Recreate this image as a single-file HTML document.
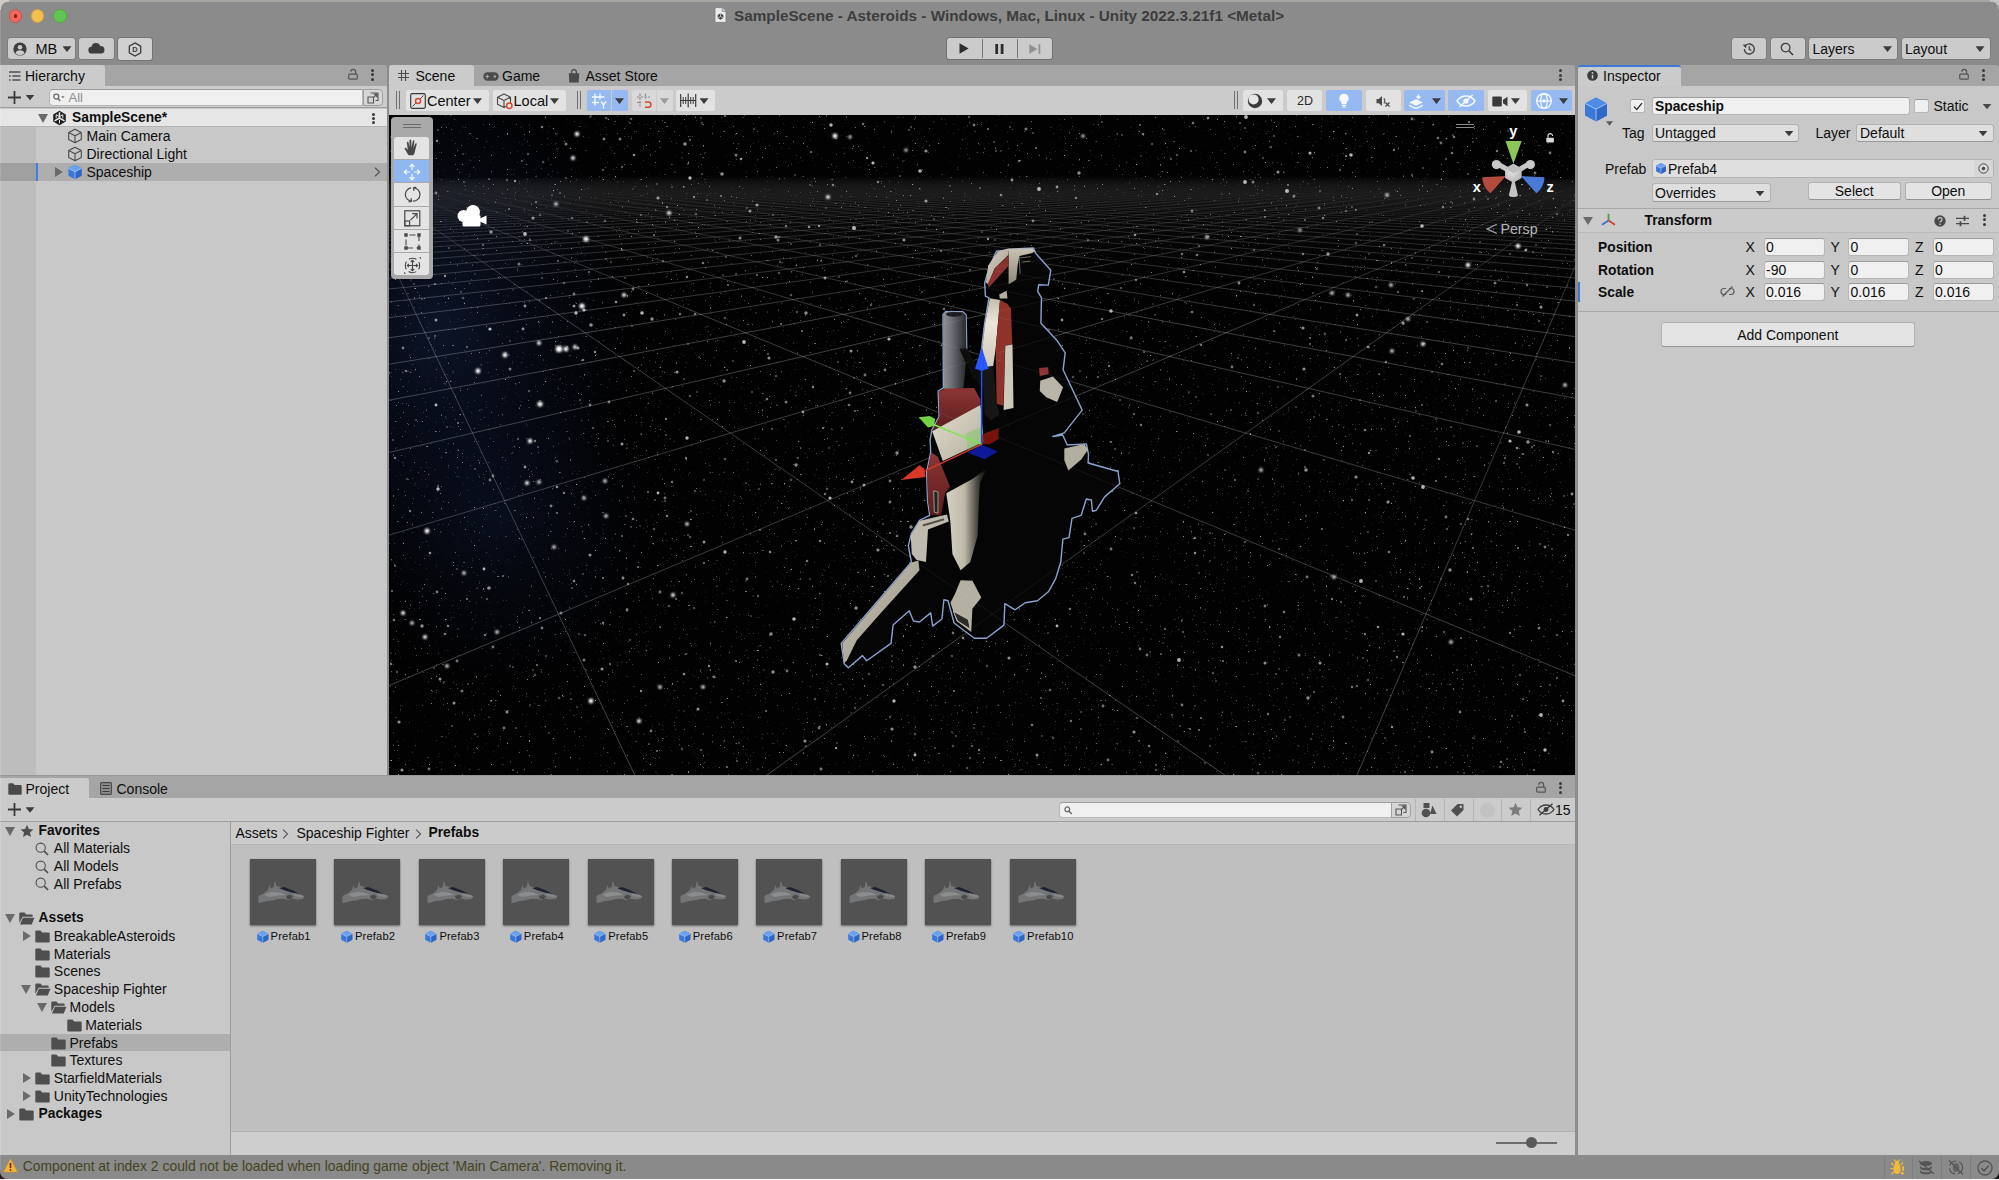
<!DOCTYPE html>
<html lang="en">
<head>
<meta charset="utf-8">
<title>SampleScene - Asteroids - Unity</title>
<style>
*{box-sizing:border-box;margin:0;padding:0}
html,body{width:1999px;height:1180px;overflow:hidden;background:#c8c8c8}
body{font-family:"Liberation Sans",sans-serif;font-size:14px;color:#0e0e0e;position:relative;line-height:1}
.a{position:absolute}
.t{position:absolute;white-space:nowrap;line-height:18px;height:18px}
.b{font-weight:bold;font-size:13.8px}
svg{position:absolute;overflow:visible}
#win{position:absolute;left:0;top:0;width:1999px;height:1178.600px;background:#8b8b8b;border-radius:0 0 8px 8px;overflow:hidden}
.btn{position:absolute;background:#cbcbcb;border-radius:2.500px;box-shadow:0 0 0 .5px rgba(90,90,90,.55)}
.tabbar{position:absolute;background:#a5a5a5;height:21px;border-radius:3px 3px 0 0}
.tab{position:absolute;background:#cbcbcb;height:21px;top:0;border-radius:3px 3px 0 0}
.panel{position:absolute;background:#c8c8c8}
.fld{position:absolute;background:#f0f0f0;border:1px solid #b6b6b6;border-top-color:#9c9c9c;border-radius:3px}
.dd{position:absolute;background:#dfdfdf;border:1px solid #b2b2b2;border-bottom-color:#999;border-radius:3px}
.sb{position:absolute;background:#e2e2e2;border-radius:2px;top:90px;height:21px}
.sb.on{background:#95b9f0}
.tri{position:absolute;width:9px;height:5.800px;background:#3c3c3c;clip-path:polygon(0 0,100% 0,50% 100%);margin-top:.2px}
.trr{position:absolute;width:0;height:0;border-top:5px solid transparent;border-bottom:5px solid transparent;border-left:8px solid #6a6a6a}
.trd{position:absolute;width:0;height:0;border-left:5.5px solid transparent;border-right:5.5px solid transparent;border-top:9px solid #6a6a6a}
.dots{position:absolute;width:3px}
.dots i{display:block;width:3px;height:3px;border-radius:50%;background:#3a3a3a;margin-bottom:1.5px}
</style>
</head>
<body>
<div class="a" style="left:0;top:1166px;width:14px;height:12.600px;background:#2e1a16"></div><div class="a" style="left:1985px;top:1166px;width:14px;height:12.600px;background:#1a1414"></div><div class="a" style="left:0;top:1178.600px;width:1999px;height:1.400px;background:#fbfbfb"></div>
<div id="win">

<!-- ===== TITLE BAR + APP TOOLBAR ===== -->
<div class="a" style="left:8.800px;top:9.100px;width:13.600px;height:13.600px;border-radius:50%;background:#ec6a5e;border:.5px solid #d14f43"></div>
<div class="a" style="left:13.700px;top:14.100px;width:3.800px;height:3.800px;border-radius:50%;background:#8c1a10"></div>
<div class="a" style="left:30.800px;top:9.300px;width:13.600px;height:13.600px;border-radius:50%;background:#f4bf4f;border:.5px solid #d6a243"></div>
<div class="a" style="left:53px;top:9.100px;width:13.600px;height:13.600px;border-radius:50%;background:#61c554;border:.5px solid #51a73e"></div>
<svg style="left:714px;top:7px" width="13" height="16" viewBox="0 0 13 16"><path d="M1 .6h7.2l3.8 3.8v11H1z" fill="#ececec" stroke="#7a7a7a" stroke-width=".8"/><path d="M8.2.6v3.8H12" fill="#d0d0d0" stroke="#7a7a7a" stroke-width=".7"/><path d="M6.5 6.3l2.8 1.6v3.2l-2.8 1.6-2.8-1.6V7.9z" fill="#444"/><path d="M6.5 9.5V6.3M6.5 9.5l2.8 1.6M6.5 9.5l-2.8 1.6" stroke="#ececec" stroke-width=".7"/></svg>
<div class="t" style="left:734px;top:6.5px;font-weight:bold;font-size:15.3px;color:#3d3d3d">SampleScene - Asteroids - Windows, Mac, Linux - Unity 2022.3.21f1 &lt;Metal&gt;</div>

<!-- ===== APP TOOLBAR ===== -->
<div class="btn" style="left:8px;top:38px;width:67px;height:21px"></div>
<svg style="left:13px;top:41.5px" width="14" height="14" viewBox="0 0 14 14"><circle cx="7" cy="7" r="6.6" fill="#3d3d3d"/><circle cx="7" cy="5.3" r="2.3" fill="#cbcbcb"/><path d="M2.6 10.9c.8-2 2.5-2.6 4.4-2.6s3.6.6 4.4 2.6c-1 1.3-2.6 2.1-4.4 2.1s-3.400-.8-4.400-2.100z" fill="#cbcbcb"/></svg>
<div class="t" style="left:35.5px;top:39.5px;font-size:14.5px">MB</div>
<div class="tri" style="left:62.5px;top:46px"></div>
<div class="btn" style="left:79px;top:38px;width:35px;height:21px"></div>
<svg style="left:88px;top:43px" width="17" height="11" viewBox="0 0 17 11"><path d="M4 10.6a3.4 3.4 0 0 1-.5-6.800A4.600 4.600 0 0 1 12.300 3a3.800 3.800 0 0 1 .7 7.600z" fill="#3d3d3d"/></svg>
<div class="btn" style="left:117.500px;top:37.500px;width:34px;height:22.500px;background:#d0d0d0;box-shadow:0 0 0 1px #747474"></div>
<svg style="left:128px;top:42px" width="14" height="15" viewBox="0 0 14 15"><path d="M7 .9l5.700 3.300v6.600L7 14.100 1.300 10.800V4.200z" fill="none" stroke="#3d3d3d" stroke-width="1.300"/><text x="7" y="10.400" font-size="7.500" font-family="Liberation Sans,sans-serif" font-weight="bold" text-anchor="middle" fill="#3d3d3d">D</text></svg>

<div class="btn" style="left:946.500px;top:38px;width:105px;height:21px;box-shadow:0 0 0 .8px #6a6a6a"></div>
<div class="a" style="left:981.500px;top:39px;width:1px;height:19px;background:#7c7c7c"></div>
<div class="a" style="left:1016.500px;top:39px;width:1px;height:19px;background:#7c7c7c"></div>
<svg style="left:959px;top:43px" width="10" height="11" viewBox="0 0 10 11"><path d="M.5.3L9.600 5.500.5 10.700z" fill="#2d2d2d"/></svg>
<svg style="left:995px;top:43.500px" width="9" height="10" viewBox="0 0 9 10"><path d="M.3 0h2.800v10H.3zM5.700 0h2.800v10H5.700z" fill="#2d2d2d"/></svg>
<svg style="left:1029px;top:43.500px" width="12" height="10" viewBox="0 0 12 10"><path d="M.3.200L8.300 5 .3 9.800z" fill="#8f8f8f"/><path d="M9.600.200h1.700v9.600H9.600z" fill="#8f8f8f"/></svg>

<div class="btn" style="left:1732px;top:38px;width:34px;height:21px"></div>
<svg style="left:1742px;top:41.500px" width="14" height="14" viewBox="0 0 14 14"><path d="M2.300 7a5 5 0 1 0 1.500-3.600" fill="none" stroke="#3d3d3d" stroke-width="1.300"/><path d="M.6 2.700l3.900-.2-.5 3.700z" fill="#3d3d3d"/><path d="M7.300 4.300v3l2 1.300" fill="none" stroke="#3d3d3d" stroke-width="1.200"/></svg>
<div class="btn" style="left:1770.500px;top:38px;width:34px;height:21px"></div>
<svg style="left:1780px;top:41.500px" width="14" height="14" viewBox="0 0 14 14"><circle cx="5.600" cy="5.600" r="4.300" fill="none" stroke="#3d3d3d" stroke-width="1.300"/><path d="M8.800 8.800l4.200 4.200" stroke="#3d3d3d" stroke-width="1.600"/></svg>
<div class="btn" style="left:1809px;top:38px;width:88px;height:21px"></div>
<div class="t" style="left:1812.500px;top:39.500px;font-size:14px">Layers</div>
<div class="tri" style="left:1883px;top:46px"></div>
<div class="btn" style="left:1901.500px;top:38px;width:88px;height:21px"></div>
<div class="t" style="left:1905px;top:39.500px;font-size:14px">Layout</div>
<div class="tri" style="left:1975.500px;top:46px"></div>


<!-- ===== HIERARCHY ===== -->
<div class="tabbar" style="left:0;top:65px;width:386.500px"></div>
<div class="tab" style="left:0;top:65px;width:105px;border-radius:0 3px 0 0"></div>
<svg style="left:8.500px;top:70.500px" width="12" height="10" viewBox="0 0 12 10"><path d="M0 1h11.500M3.300 5h8.200M3.300 9h8.200" stroke="#505050" stroke-width="1.400"/><path d="M0 5h1.600M0 9h1.600" stroke="#505050" stroke-width="1.400"/></svg>
<div class="t" style="left:25px;top:67px">Hierarchy</div>
<svg style="left:347.500px;top:69px" width="10" height="11" viewBox="0 0 10 11"><rect x=".7" y="5.200" width="8.600" height="5" rx="1" fill="none" stroke="#555" stroke-width="1.200"/><path d="M7.600 5.200V2.900a2.400 2.400 0 0 0-4.800-.2" fill="none" stroke="#555" stroke-width="1.200"/></svg>
<div class="dots" style="left:370.500px;top:68.800px"><i></i><i></i><i></i></div>
<div class="panel" style="left:0;top:86px;width:386.500px;height:689px"></div>
<div class="a" style="left:0;top:86px;width:386.500px;height:22px;background:#cbcbcb;border-bottom:1px solid #9e9e9e"></div>
<svg style="left:7.500px;top:90.500px" width="13" height="13" viewBox="0 0 13 13"><path d="M6.500 0v13M0 6.500h13" stroke="#3a3a3a" stroke-width="1.800"/></svg>
<div class="tri" style="left:25.500px;top:94.500px;width:9.0px;height:5.5px"></div>
<div class="fld" style="left:49px;top:89px;width:314px;height:17px;border-radius:4px 0 0 4px"></div>
<svg style="left:53px;top:93px" width="12" height="9" viewBox="0 0 12 9"><circle cx="3.300" cy="3.600" r="2.500" fill="none" stroke="#6a6a6a" stroke-width="1.300"/><path d="M5 5.500l2.300 2.600" stroke="#6a6a6a" stroke-width="1.400"/><path d="M8.300 3.200h3.200l-1.600 2z" fill="#6a6a6a"/></svg>
<div class="t" style="left:68.500px;top:88.500px;font-size:13px;color:#8e8e8e">All</div>
<div class="a" style="left:362.500px;top:89px;width:20px;height:17px;background:#d6d6d6;border:1px solid #a0a0a0;border-radius:0 4px 4px 0"></div>
<svg style="left:366.500px;top:91.500px" width="12" height="12" viewBox="0 0 12 12"><path d="M3.500 1H11v7.500H8.500M1 5h5.500v6H1zM6 6l3.600-3.600M6.700 2.300h3v3" fill="none" stroke="#555" stroke-width="1.100"/></svg>
<div class="a" style="left:0;top:126.500px;width:35.500px;height:648.500px;background:#bdbdbd"></div>
<div class="a" style="left:0;top:108.500px;width:386.500px;height:18px;background:#e6e6e6;border-bottom:1px solid #b4b4b4"></div>
<div class="trd" style="left:37.500px;top:113.500px"></div>
<svg style="left:52px;top:110px" width="15" height="16" viewBox="0 0 15 16"><path d="M7.500.8l6.300 3.600v7.200l-6.300 3.600-6.300-3.600V4.400z" fill="#1f1f1f"/><path d="M7.500 8V2.200M7.500 8l5 2.900M7.500 8l-5 2.900" stroke="#e6e6e6" stroke-width="1.500"/><path d="M4.200 4.700l3.300 1.900 3.300-1.900M4.200 4.700v3.600M10.800 4.700v3.600M7.500 13.500v-3.600" stroke="#e6e6e6" stroke-width="1" fill="none"/></svg>
<div class="t b" style="left:72px;top:108.500px">SampleScene*</div>
<div class="dots" style="left:371.500px;top:112.500px"><i style="margin-bottom:1.200px"></i><i style="margin-bottom:1.200px"></i><i></i></div>
<svg style="left:66.500px;top:128px" width="16" height="16" viewBox="0 0 16 16"><path d="M8 1.200l6.300 3.300v7l-6.300 3.300-6.300-3.300v-7zM1.700 4.500L8 7.800l6.300-3.300M8 7.800v7" fill="none" stroke="#4a4a4a" stroke-width="1.100" stroke-linejoin="round"/></svg>
<div class="t" style="left:86.500px;top:126.500px">Main Camera</div>
<svg style="left:66.500px;top:146px" width="16" height="16" viewBox="0 0 16 16"><path d="M8 1.200l6.300 3.300v7l-6.300 3.300-6.300-3.300v-7zM1.700 4.500L8 7.800l6.300-3.300M8 7.800v7" fill="none" stroke="#4a4a4a" stroke-width="1.100" stroke-linejoin="round"/></svg>
<div class="t" style="left:86.500px;top:144.500px">Directional Light</div>
<div class="a" style="left:0;top:162.500px;width:386.500px;height:18px;background:#aeaeae"></div>
<div class="a" style="left:0;top:162.500px;width:35.500px;height:18px;background:#a0a0a0"></div>
<div class="a" style="left:35.500px;top:162.500px;width:2.500px;height:18px;background:#3f7de0"></div>
<div class="trr" style="left:54.500px;top:166.500px"></div>
<svg style="left:66.500px;top:164px" width="16" height="16" viewBox="0 0 16 16"><path d="M8 .8l6.600 3.500v7.400L8 15.200l-6.600-3.500V4.300z" fill="#3a78d8"/><path d="M8 .8l6.600 3.500L8 7.800 1.400 4.300z" fill="#6aa2f0"/><path d="M8 7.800v7.400l6.600-3.500V4.300z" fill="#2f66c4"/><path d="M1.400 4.300L8 7.800l6.600-3.500M8 7.800v7.400" fill="none" stroke="#cfe0fa" stroke-width=".6"/></svg>
<div class="t" style="left:86.500px;top:162.500px">Spaceship</div>
<svg style="left:374px;top:167px" width="7" height="10" viewBox="0 0 7 10"><path d="M1 .7l4.600 4.300L1 9.300" fill="none" stroke="#555" stroke-width="1.200"/></svg>
<div class="a" style="left:386.500px;top:65px;width:2.500px;height:710px;background:#8c8c8c"></div>


<!-- ===== SCENE TABS + TOOLBAR ===== -->
<div class="tabbar" style="left:389px;top:65px;width:1186px"></div>
<div class="tab" style="left:389px;top:65px;width:85px"></div>
<svg style="left:398px;top:70px" width="11" height="11" viewBox="0 0 11 11"><path d="M3.500 0v11M7.500 0v11M0 3.500h11M0 7.500h11" stroke="#4a4a4a" stroke-width="1.100"/></svg>
<div class="t" style="left:415.500px;top:67px">Scene</div>
<svg style="left:483px;top:71.500px" width="16" height="9" viewBox="0 0 16 9"><rect x=".3" y=".3" width="15.400" height="8.400" rx="4.200" fill="#4a4a4a"/><path d="M4.300 2.500v4M2.300 4.500h4" stroke="#a5a5a5" stroke-width="1.100"/><circle cx="11.800" cy="4.500" r="1.300" fill="#a5a5a5"/></svg>
<div class="t" style="left:502px;top:67px">Game</div>
<svg style="left:568px;top:68.500px" width="12" height="14" viewBox="0 0 12 14"><path d="M.8 4.300h10.400l-.5 9.200H1.300z" fill="#4a4a4a"/><path d="M3.600 5.500V3a2.400 2.400 0 0 1 4.800 0v2.500" fill="none" stroke="#4a4a4a" stroke-width="1.200"/></svg>
<div class="t" style="left:585.500px;top:67px">Asset Store</div>
<div class="dots" style="left:1558.500px;top:69px"><i></i><i></i><i></i></div>
<div class="a" style="left:389px;top:86px;width:1186px;height:29px;background:#cbcbcb"></div>
<div class="a" style="left:396px;top:91px;width:1.300px;height:18px;background:#6e6e6e"></div>
<div class="a" style="left:399.200px;top:91px;width:1.300px;height:18px;background:#6e6e6e"></div>
<div class="sb" style="left:406px;width:83px"></div>
<svg style="left:410px;top:93px" width="16" height="16" viewBox="0 0 16 16"><rect x=".7" y=".7" width="14.600" height="14.600" rx="1.500" fill="none" stroke="#3a3a3a" stroke-width="1.200"/><path d="M2.500 13.500l11-11" stroke="#3a3a3a" stroke-width=".9"/><circle cx="8" cy="8" r="2.500" fill="#e2e2e2" stroke="#d8492f" stroke-width="1.500"/></svg>
<div class="t" style="left:427px;top:91.500px;font-size:14.500px">Center</div>
<div class="tri" style="left:473px;top:98px"></div>
<div class="sb" style="left:492.500px;width:73.500px"></div>
<svg style="left:496px;top:92.500px" width="18" height="17" viewBox="0 0 18 17"><path d="M8 1l6.500 3.200v7L8 14.500 1.500 11.200v-7zM1.500 4.200L8 7.500l6.500-3.300M8 7.500v7" fill="none" stroke="#4a4a4a" stroke-width="1.100" stroke-linejoin="round"/><circle cx="13.300" cy="12.800" r="2.700" fill="#e2e2e2" stroke="#d8492f" stroke-width="1.500"/></svg>
<div class="t" style="left:513.500px;top:91.500px;font-size:14.500px">Local</div>
<div class="tri" style="left:550px;top:98px"></div>
<div class="a" style="left:576.500px;top:91px;width:1.300px;height:18px;background:#6e6e6e"></div>
<div class="a" style="left:579.700px;top:91px;width:1.300px;height:18px;background:#6e6e6e"></div>
<div class="sb on" style="left:586.500px;width:24.500px;border-radius:2px 0 0 2px"></div>
<div class="sb on" style="left:611.500px;width:16.500px;border-radius:0 2px 2px 0"></div>
<svg style="left:591px;top:93px" width="17" height="16" viewBox="0 0 17 16"><path d="M4 .5v12M9 .5v6M1 4h12.500M1 9.500h7" stroke="#f4f8ff" stroke-width="1.300" fill="none"/><path d="M10 8.500l2.500 3.300 2.500-3.300M12.500 11.800V15.500" stroke="#f4f8ff" stroke-width="1.400" fill="none"/><path d="M11.500 2l2.500 2-2.500 2M2.500 11l2 2 2-2" fill="#f4f8ff" stroke="none" opacity="0"/></svg>
<div class="tri" style="left:615px;top:98px"></div>
<div class="sb" style="left:631.500px;width:24.500px;background:#d9d9d9;border-radius:2px 0 0 2px"></div>
<div class="sb" style="left:656.500px;width:16px;background:#d9d9d9;border-radius:0 2px 2px 0"></div>
<svg style="left:636px;top:93px" width="17" height="16" viewBox="0 0 17 16"><path d="M4 .5v13M9.500 .5v5M1 4h13M1 9.500h4" stroke="#8a8a8a" stroke-width="1.200" stroke-dasharray="2.500 1.200" fill="none"/><path d="M9 14.300h3.300a2.600 2.600 0 0 0 0-5.200H9" fill="none" stroke="#d8492f" stroke-width="1.500"/></svg>
<div class="tri" style="left:660px;top:98px;background:#9c9c9c;width:9.0px"></div>
<div class="sb" style="left:675.500px;width:39.500px"></div>
<svg style="left:680px;top:93px" width="17" height="15" viewBox="0 0 17 15"><path d="M.7 1v13M15.700 1v13M8.200 .5v14" stroke="#3a3a3a" stroke-width="1.200"/><path d="M3.200 4v7M5.700 4v7M10.700 4v7M13.200 4v7" stroke="#3a3a3a" stroke-width="1"/><path d="M.7 7.500h15" stroke="#3a3a3a" stroke-width="1"/></svg>
<div class="tri" style="left:699.500px;top:98px"></div>

<div class="a" style="left:1233.500px;top:91px;width:1.300px;height:18px;background:#6e6e6e"></div>
<div class="a" style="left:1236.700px;top:91px;width:1.300px;height:18px;background:#6e6e6e"></div>
<div class="sb" style="left:1243px;width:40px"></div>
<svg style="left:1247px;top:93px" width="16" height="16" viewBox="0 0 16 16"><circle cx="8" cy="8" r="7.200" fill="#3a3a3a"/><circle cx="6.600" cy="6.400" r="5" fill="#e6e6e6"/></svg>
<div class="tri" style="left:1267px;top:98px"></div>
<div class="sb" style="left:1287px;width:35px"></div>
<div class="t" style="left:1297px;top:92px;font-size:12.500px;color:#2a2a2a">2D</div>
<div class="sb on" style="left:1326px;width:36px"></div>
<svg style="left:1338px;top:93px" width="12" height="16" viewBox="0 0 12 16"><path d="M6 .8a4.600 4.600 0 0 1 2.600 8.400v1.800H3.400V9.200A4.600 4.600 0 0 1 6 .8z" fill="#f6f9ff"/><path d="M3.700 12.300h4.600M4.300 14h3.400" stroke="#f6f9ff" stroke-width="1.200"/></svg>
<div class="sb" style="left:1365.500px;width:35px"></div>
<svg style="left:1376px;top:94.500px" width="15" height="13" viewBox="0 0 15 13"><path d="M.5 4h2.300L6 1v10L2.800 8.300H.5z" fill="#4a4a4a"/><path d="M7.800 3.500a3.500 3.500 0 0 1 0 5" fill="none" stroke="#4a4a4a" stroke-width="1.100"/><path d="M9.500 7.500l4 4M13.500 7.500l-4 4" stroke="#4a4a4a" stroke-width="1.200"/></svg>
<div class="sb on" style="left:1404px;width:24.500px;border-radius:2px 0 0 2px"></div>
<div class="sb on" style="left:1429px;width:15.500px;border-radius:0 2px 2px 0"></div>
<svg style="left:1408px;top:93.500px" width="16" height="15" viewBox="0 0 16 15"><path d="M1 8.500l7-3.200 7 3.200-7 3.200z" fill="#f6f9ff"/><path d="M1 11.300l7 3.200 7-3.200" fill="none" stroke="#f6f9ff" stroke-width="1.300"/><path d="M10.500 0l.9 2.100 2.100.9-2.100.9-.9 2.100-.9-2.100-2.100-.9 2.100-.9z" fill="#f6f9ff"/></svg>
<div class="tri" style="left:1432px;top:98px"></div>
<div class="sb on" style="left:1448px;width:36px"></div>
<svg style="left:1456px;top:93.500px" width="20" height="14" viewBox="0 0 20 14"><path d="M1 7c2.300-3.300 5.300-5 9-5s6.700 1.700 9 5c-2.300 3.300-5.300 5-9 5S3.300 10.300 1 7z" fill="none" stroke="#f6f9ff" stroke-width="1.400"/><circle cx="10" cy="7" r="2.600" fill="#f6f9ff"/><path d="M3.500 13L16.500 1" stroke="#f6f9ff" stroke-width="1.500"/></svg>
<div class="sb" style="left:1487.500px;width:39.500px"></div>
<svg style="left:1492px;top:95.500px" width="16" height="11" viewBox="0 0 16 11"><rect x=".3" y=".5" width="9.500" height="10" rx="1" fill="#3a3a3a"/><path d="M11 3.800L15.500.8v9.400L11 7.200z" fill="#3a3a3a"/></svg>
<div class="tri" style="left:1511px;top:98px"></div>
<div class="sb on" style="left:1531px;width:24.500px;border-radius:2px 0 0 2px"></div>
<div class="sb on" style="left:1556px;width:16px;border-radius:0 2px 2px 0"></div>
<svg style="left:1534.500px;top:92px" width="18" height="18" viewBox="0 0 18 18"><circle cx="9" cy="9" r="7.300" fill="none" stroke="#f6f9ff" stroke-width="1.400"/><ellipse cx="9" cy="9" rx="3.300" ry="7.300" fill="none" stroke="#f6f9ff" stroke-width="1.200"/><path d="M1.700 9h14.600" stroke="#f6f9ff" stroke-width="1.200"/><circle cx="9" cy="9" r="1.700" fill="#f6f9ff"/></svg>
<div class="tri" style="left:1559px;top:98px"></div>

<div class="a" style="left:388.5px;top:115px;width:1186.5px;height:660.2px;background:#020203;overflow:hidden">
<svg style="left:.5px;top:0" width="1186" height="660" viewBox="389 115 1186 660">
<defs><linearGradient id="gfade" x1="0" y1="0" x2="0" y2="1" gradientUnits="objectBoundingBox"><stop offset="0" stop-color="#fff" stop-opacity="0"/><stop offset=".092" stop-color="#fff" stop-opacity="0"/><stop offset=".17" stop-color="#fff" stop-opacity=".5"/><stop offset=".32" stop-color="#fff" stop-opacity=".9"/><stop offset=".6" stop-color="#fff" stop-opacity=".8"/><stop offset="1" stop-color="#fff" stop-opacity="1"/></linearGradient><mask id="gmask" maskUnits="userSpaceOnUse" x="389" y="115" width="1186" height="660"><rect x="389" y="115" width="1186" height="660" fill="url(#gfade)"/></mask><linearGradient id="hz" x1="0" y1="0" x2="0" y2="1"><stop offset="0" stop-color="#fff" stop-opacity="0"/><stop offset=".2" stop-color="#fff" stop-opacity=".03"/><stop offset="1" stop-color="#fff" stop-opacity="0"/></linearGradient><radialGradient id="neb"><stop offset="0" stop-color="#16264c" stop-opacity=".5"/><stop offset="1" stop-color="#0a1430" stop-opacity="0"/></radialGradient><filter id="fst" x="0" y="0" width="100%" height="100%" color-interpolation-filters="sRGB"><feTurbulence type="fractalNoise" baseFrequency="0.42" numOctaves="2" seed="3"/><feColorMatrix type="matrix" values="0 0 0 0 1  0 0 0 0 1  0 0 0 0 1  7 0 0 0 -5.120"/><feGaussianBlur stdDeviation=".55"/></filter><filter id="sbl" x="-5%" y="-5%" width="110%" height="110%"><feGaussianBlur stdDeviation=".75"/></filter><filter id="glow" x="-100%" y="-100%" width="300%" height="300%"><feGaussianBlur stdDeviation="1.100"/></filter></defs>
<ellipse cx="440" cy="330" rx="190" ry="260" fill="url(#neb)"/>
<ellipse cx="500" cy="520" rx="150" ry="160" fill="url(#neb)" opacity=".6"/>
<rect x="389" y="174" width="1186" height="110" fill="url(#hz)"/>
<rect x="389" y="115" width="1186" height="660" filter="url(#fst)" opacity=".6"/>
<g fill="#fff" fill-opacity="0.3" filter="url(#sbl)"><circle cx="773" cy="215" r="1.1"/><circle cx="475" cy="469" r="1.0"/><circle cx="458" cy="450" r="0.8"/><circle cx="903" cy="161" r="0.8"/><circle cx="892" cy="661" r="0.9"/><circle cx="654" cy="529" r="1.3"/><circle cx="1073" cy="377" r="1.3"/><circle cx="444" cy="682" r="0.9"/><circle cx="560" cy="193" r="1.0"/><circle cx="1357" cy="234" r="1.1"/><circle cx="1147" cy="361" r="1.1"/><circle cx="463" cy="154" r="0.9"/><circle cx="1196" cy="397" r="1.0"/><circle cx="1083" cy="414" r="0.9"/><circle cx="1331" cy="576" r="0.9"/><circle cx="1070" cy="462" r="1.2"/><circle cx="1254" cy="305" r="1.3"/><circle cx="529" cy="391" r="1.2"/><circle cx="569" cy="438" r="0.8"/><circle cx="1182" cy="620" r="1.1"/><circle cx="1427" cy="322" r="1.1"/><circle cx="1094" cy="498" r="1.0"/><circle cx="1385" cy="738" r="1.0"/><circle cx="1177" cy="155" r="1.2"/><circle cx="1156" cy="770" r="1.2"/><circle cx="727" cy="370" r="1.1"/><circle cx="416" cy="420" r="0.9"/><circle cx="528" cy="154" r="1.2"/><circle cx="542" cy="278" r="1.0"/><circle cx="1423" cy="168" r="1.0"/><circle cx="1041" cy="698" r="1.2"/><circle cx="1414" cy="299" r="1.0"/><circle cx="815" cy="699" r="1.3"/><circle cx="568" cy="231" r="0.9"/><circle cx="666" cy="435" r="1.1"/><circle cx="701" cy="118" r="1.0"/><circle cx="827" cy="489" r="1.3"/><circle cx="1208" cy="455" r="1.1"/><circle cx="1191" cy="151" r="1.2"/><circle cx="1314" cy="692" r="1.2"/><circle cx="854" cy="378" r="0.9"/><circle cx="1141" cy="156" r="0.8"/><circle cx="637" cy="222" r="1.0"/><circle cx="451" cy="115" r="0.9"/><circle cx="509" cy="355" r="0.8"/><circle cx="1426" cy="520" r="0.9"/><circle cx="688" cy="344" r="1.0"/><circle cx="535" cy="675" r="1.3"/><circle cx="942" cy="434" r="0.8"/><circle cx="510" cy="341" r="0.9"/><circle cx="1372" cy="222" r="0.8"/><circle cx="1517" cy="464" r="0.9"/><circle cx="1033" cy="133" r="1.1"/><circle cx="1550" cy="685" r="1.1"/><circle cx="699" cy="357" r="0.9"/><circle cx="1305" cy="467" r="1.2"/><circle cx="780" cy="262" r="1.2"/><circle cx="1557" cy="678" r="1.2"/><circle cx="1360" cy="603" r="0.9"/><circle cx="1003" cy="350" r="0.8"/><circle cx="422" cy="299" r="0.9"/><circle cx="1210" cy="746" r="1.0"/><circle cx="1500" cy="767" r="1.3"/><circle cx="821" cy="261" r="0.9"/><circle cx="622" cy="250" r="1.1"/><circle cx="1457" cy="670" r="1.0"/><circle cx="1163" cy="643" r="0.8"/><circle cx="1172" cy="715" r="1.2"/><circle cx="1279" cy="431" r="0.9"/><circle cx="1325" cy="334" r="1.2"/><circle cx="1541" cy="376" r="1.0"/><circle cx="1512" cy="593" r="0.9"/><circle cx="540" cy="215" r="1.3"/><circle cx="1346" cy="211" r="1.2"/><circle cx="1552" cy="549" r="1.0"/><circle cx="1040" cy="201" r="0.8"/><circle cx="1540" cy="544" r="1.1"/><circle cx="1496" cy="401" r="1.2"/><circle cx="1369" cy="254" r="0.9"/><circle cx="736" cy="274" r="1.1"/><circle cx="697" cy="392" r="0.9"/><circle cx="1468" cy="348" r="1.0"/><circle cx="1081" cy="712" r="1.0"/><circle cx="1477" cy="446" r="1.1"/><circle cx="1010" cy="127" r="1.0"/><circle cx="606" cy="118" r="1.2"/><circle cx="593" cy="428" r="1.2"/><circle cx="1049" cy="330" r="1.1"/><circle cx="1048" cy="633" r="0.9"/><circle cx="1054" cy="279" r="0.9"/><circle cx="1305" cy="450" r="1.1"/><circle cx="1290" cy="717" r="1.0"/><circle cx="1115" cy="449" r="1.1"/><circle cx="1211" cy="414" r="1.1"/><circle cx="956" cy="736" r="1.1"/><circle cx="1429" cy="737" r="0.9"/><circle cx="1053" cy="738" r="1.2"/><circle cx="552" cy="195" r="1.0"/><circle cx="475" cy="274" r="0.8"/><circle cx="1183" cy="632" r="1.2"/><circle cx="572" cy="588" r="1.1"/><circle cx="559" cy="698" r="1.3"/><circle cx="649" cy="744" r="1.0"/><circle cx="967" cy="768" r="1.2"/><circle cx="580" cy="400" r="1.1"/><circle cx="791" cy="244" r="1.0"/><circle cx="1245" cy="128" r="1.1"/><circle cx="911" cy="127" r="1.0"/><circle cx="1129" cy="453" r="0.8"/><circle cx="1557" cy="635" r="1.3"/><circle cx="513" cy="290" r="0.8"/><circle cx="1313" cy="293" r="0.9"/><circle cx="890" cy="717" r="1.2"/><circle cx="696" cy="214" r="1.3"/><circle cx="1066" cy="577" r="0.8"/><circle cx="457" cy="569" r="1.0"/><circle cx="475" cy="734" r="1.1"/><circle cx="1340" cy="170" r="1.2"/><circle cx="468" cy="684" r="1.0"/><circle cx="791" cy="480" r="1.3"/><circle cx="707" cy="200" r="1.1"/><circle cx="672" cy="187" r="0.9"/><circle cx="449" cy="248" r="1.0"/><circle cx="751" cy="616" r="0.9"/><circle cx="982" cy="232" r="1.0"/><circle cx="411" cy="280" r="0.8"/><circle cx="1258" cy="479" r="0.9"/><circle cx="952" cy="732" r="0.9"/><circle cx="1360" cy="400" r="1.0"/><circle cx="1379" cy="374" r="1.1"/><circle cx="1205" cy="763" r="1.0"/><circle cx="1376" cy="581" r="1.1"/><circle cx="869" cy="344" r="0.8"/><circle cx="543" cy="162" r="1.2"/><circle cx="692" cy="223" r="0.8"/><circle cx="1387" cy="690" r="1.1"/><circle cx="723" cy="275" r="0.9"/><circle cx="934" cy="219" r="1.0"/><circle cx="701" cy="750" r="1.3"/><circle cx="1038" cy="276" r="1.3"/><circle cx="756" cy="350" r="0.8"/><circle cx="842" cy="428" r="1.1"/><circle cx="627" cy="448" r="0.8"/><circle cx="702" cy="174" r="1.0"/><circle cx="438" cy="130" r="1.0"/><circle cx="665" cy="501" r="1.1"/><circle cx="1279" cy="549" r="1.2"/><circle cx="1432" cy="372" r="1.0"/><circle cx="1557" cy="214" r="1.2"/><circle cx="1152" cy="144" r="1.2"/><circle cx="1447" cy="529" r="1.2"/><circle cx="1352" cy="207" r="1.1"/><circle cx="987" cy="666" r="1.2"/><circle cx="1369" cy="500" r="1.2"/><circle cx="1199" cy="573" r="0.9"/><circle cx="426" cy="203" r="1.0"/><circle cx="513" cy="667" r="1.1"/><circle cx="1134" cy="528" r="1.1"/><circle cx="969" cy="117" r="1.2"/><circle cx="1276" cy="447" r="1.1"/><circle cx="1171" cy="159" r="1.2"/><circle cx="688" cy="164" r="0.9"/><circle cx="1254" cy="250" r="1.2"/><circle cx="1546" cy="441" r="1.0"/><circle cx="957" cy="566" r="1.2"/><circle cx="1121" cy="539" r="0.8"/><circle cx="564" cy="283" r="1.2"/><circle cx="750" cy="490" r="0.8"/><circle cx="461" cy="292" r="1.1"/><circle cx="1210" cy="561" r="0.9"/><circle cx="1002" cy="422" r="1.0"/><circle cx="530" cy="705" r="0.9"/><circle cx="1549" cy="733" r="0.8"/><circle cx="933" cy="656" r="1.3"/><circle cx="922" cy="292" r="0.9"/><circle cx="1510" cy="254" r="1.1"/><circle cx="557" cy="461" r="1.3"/><circle cx="546" cy="656" r="1.1"/><circle cx="1441" cy="579" r="0.9"/><circle cx="1454" cy="436" r="0.8"/><circle cx="393" cy="440" r="1.0"/><circle cx="747" cy="208" r="1.0"/><circle cx="764" cy="670" r="0.8"/><circle cx="1279" cy="669" r="0.9"/><circle cx="1488" cy="586" r="1.3"/><circle cx="733" cy="361" r="1.0"/><circle cx="1574" cy="504" r="1.0"/><circle cx="897" cy="297" r="0.8"/><circle cx="510" cy="666" r="0.9"/><circle cx="1499" cy="280" r="0.9"/><circle cx="995" cy="240" r="1.0"/><circle cx="1523" cy="699" r="1.2"/><circle cx="1137" cy="718" r="1.3"/><circle cx="1040" cy="590" r="0.8"/><circle cx="1258" cy="413" r="1.2"/><circle cx="1153" cy="304" r="0.8"/><circle cx="1488" cy="199" r="1.0"/><circle cx="797" cy="312" r="1.2"/><circle cx="1547" cy="287" r="1.1"/><circle cx="746" cy="483" r="1.0"/><circle cx="587" cy="222" r="0.9"/><circle cx="1463" cy="443" r="0.9"/><circle cx="1464" cy="773" r="1.0"/><circle cx="555" cy="242" r="0.8"/><circle cx="795" cy="175" r="0.9"/><circle cx="695" cy="491" r="1.2"/><circle cx="1278" cy="387" r="1.0"/><circle cx="1011" cy="364" r="1.0"/><circle cx="463" cy="298" r="1.3"/><circle cx="538" cy="447" r="1.1"/><circle cx="1412" cy="258" r="0.9"/><circle cx="684" cy="379" r="1.0"/><circle cx="1520" cy="675" r="1.2"/><circle cx="415" cy="136" r="1.2"/><circle cx="1451" cy="427" r="1.1"/><circle cx="389" cy="373" r="1.3"/><circle cx="1368" cy="680" r="1.3"/><circle cx="684" cy="187" r="0.9"/><circle cx="1009" cy="565" r="1.3"/><circle cx="1245" cy="542" r="1.2"/><circle cx="931" cy="479" r="0.8"/><circle cx="1317" cy="269" r="1.3"/><circle cx="1155" cy="315" r="0.9"/><circle cx="688" cy="535" r="1.1"/><circle cx="522" cy="161" r="1.1"/><circle cx="1080" cy="371" r="0.9"/><circle cx="1102" cy="122" r="1.0"/><circle cx="935" cy="748" r="1.1"/><circle cx="1437" cy="429" r="0.9"/><circle cx="682" cy="749" r="1.2"/><circle cx="754" cy="129" r="1.0"/><circle cx="1189" cy="392" r="0.9"/><circle cx="1180" cy="726" r="0.9"/><circle cx="429" cy="338" r="1.0"/><circle cx="1199" cy="246" r="1.2"/><circle cx="1266" cy="448" r="0.9"/><circle cx="1539" cy="321" r="1.2"/><circle cx="663" cy="261" r="1.2"/><circle cx="739" cy="743" r="1.0"/><circle cx="611" cy="262" r="1.0"/><circle cx="1178" cy="741" r="0.9"/><circle cx="856" cy="256" r="1.3"/><circle cx="557" cy="149" r="0.8"/><circle cx="855" cy="708" r="1.2"/><circle cx="1258" cy="773" r="1.3"/><circle cx="779" cy="237" r="1.3"/><circle cx="1274" cy="136" r="1.1"/><circle cx="838" cy="362" r="1.0"/><circle cx="590" cy="117" r="0.9"/><circle cx="806" cy="746" r="0.9"/><circle cx="1533" cy="252" r="1.0"/><circle cx="1363" cy="658" r="1.0"/><circle cx="447" cy="427" r="1.0"/><circle cx="1480" cy="242" r="1.0"/><circle cx="1453" cy="135" r="1.0"/><circle cx="1352" cy="621" r="0.8"/><circle cx="430" cy="156" r="1.3"/><circle cx="694" cy="608" r="1.2"/><circle cx="791" cy="295" r="1.3"/><circle cx="1121" cy="288" r="1.2"/><circle cx="764" cy="297" r="0.8"/><circle cx="1285" cy="720" r="1.1"/><circle cx="1508" cy="131" r="0.9"/><circle cx="953" cy="746" r="1.3"/><circle cx="847" cy="281" r="1.0"/><circle cx="974" cy="728" r="0.9"/><circle cx="1341" cy="602" r="1.2"/><circle cx="1306" cy="516" r="1.0"/><circle cx="768" cy="354" r="1.2"/><circle cx="483" cy="245" r="1.2"/><circle cx="682" cy="158" r="0.8"/><circle cx="1044" cy="330" r="1.3"/><circle cx="1437" cy="767" r="0.9"/><circle cx="489" cy="179" r="1.0"/><circle cx="1231" cy="410" r="0.9"/><circle cx="883" cy="524" r="1.1"/><circle cx="1276" cy="674" r="1.1"/><circle cx="533" cy="670" r="0.9"/><circle cx="1061" cy="361" r="1.2"/><circle cx="625" cy="278" r="0.9"/><circle cx="571" cy="699" r="1.1"/><circle cx="776" cy="376" r="1.3"/><circle cx="991" cy="268" r="1.2"/><circle cx="1164" cy="769" r="0.9"/><circle cx="952" cy="656" r="1.2"/><circle cx="1473" cy="142" r="0.9"/><circle cx="530" cy="240" r="1.3"/><circle cx="1081" cy="729" r="1.0"/><circle cx="1416" cy="411" r="0.9"/><circle cx="1311" cy="739" r="0.9"/><circle cx="1096" cy="524" r="0.9"/><circle cx="826" cy="208" r="0.9"/><circle cx="691" cy="511" r="1.1"/><circle cx="630" cy="123" r="1.0"/><circle cx="1193" cy="237" r="1.0"/><circle cx="630" cy="640" r="1.1"/><circle cx="464" cy="182" r="1.0"/><circle cx="1041" cy="537" r="0.8"/><circle cx="583" cy="574" r="1.0"/><circle cx="725" cy="318" r="1.3"/><circle cx="759" cy="489" r="1.0"/><circle cx="883" cy="685" r="1.3"/><circle cx="820" cy="245" r="1.2"/><circle cx="631" cy="119" r="1.3"/><circle cx="892" cy="656" r="1.0"/><circle cx="1436" cy="419" r="0.9"/><circle cx="407" cy="479" r="1.1"/><circle cx="1468" cy="174" r="1.1"/><circle cx="829" cy="448" r="0.9"/><circle cx="725" cy="459" r="1.3"/><circle cx="518" cy="439" r="1.2"/><circle cx="1536" cy="245" r="0.9"/><circle cx="1507" cy="759" r="1.0"/><circle cx="452" cy="726" r="1.0"/><circle cx="1461" cy="524" r="1.2"/><circle cx="579" cy="634" r="0.9"/><circle cx="869" cy="674" r="1.2"/><circle cx="606" cy="259" r="1.0"/><circle cx="1003" cy="368" r="0.9"/><circle cx="682" cy="593" r="1.2"/><circle cx="438" cy="486" r="1.2"/><circle cx="434" cy="668" r="0.9"/><circle cx="1100" cy="478" r="1.1"/><circle cx="752" cy="392" r="1.1"/><circle cx="894" cy="550" r="1.0"/><circle cx="909" cy="130" r="1.1"/><circle cx="970" cy="270" r="1.2"/><circle cx="1314" cy="417" r="0.9"/><circle cx="950" cy="186" r="0.9"/><circle cx="900" cy="176" r="1.0"/><circle cx="994" cy="142" r="1.1"/><circle cx="487" cy="599" r="1.2"/><circle cx="996" cy="151" r="1.1"/><circle cx="837" cy="743" r="0.9"/><circle cx="1405" cy="772" r="1.2"/><circle cx="1356" cy="243" r="1.3"/><circle cx="972" cy="746" r="1.3"/><circle cx="585" cy="635" r="1.3"/><circle cx="467" cy="347" r="1.2"/><circle cx="577" cy="707" r="0.9"/><circle cx="1356" cy="210" r="1.1"/><circle cx="1480" cy="252" r="0.9"/><circle cx="989" cy="326" r="0.8"/><circle cx="605" cy="221" r="1.3"/><circle cx="1195" cy="706" r="0.9"/><circle cx="1320" cy="191" r="1.1"/><circle cx="1144" cy="352" r="1.2"/><circle cx="1047" cy="498" r="1.2"/><circle cx="513" cy="770" r="1.1"/><circle cx="857" cy="641" r="0.9"/><circle cx="1564" cy="496" r="1.0"/><circle cx="1296" cy="407" r="0.9"/><circle cx="1271" cy="147" r="1.2"/><circle cx="690" cy="537" r="1.3"/><circle cx="1084" cy="553" r="1.0"/><circle cx="391" cy="137" r="0.9"/><circle cx="1120" cy="400" r="1.1"/><circle cx="1451" cy="202" r="0.9"/><circle cx="1164" cy="130" r="0.8"/><circle cx="810" cy="185" r="1.0"/><circle cx="655" cy="500" r="1.1"/><circle cx="631" cy="527" r="1.0"/><circle cx="549" cy="733" r="0.9"/><circle cx="566" cy="178" r="1.1"/><circle cx="1422" cy="631" r="1.0"/><circle cx="702" cy="123" r="1.1"/><circle cx="1056" cy="346" r="1.1"/><circle cx="915" cy="734" r="1.2"/><circle cx="684" cy="711" r="0.8"/><circle cx="1019" cy="383" r="0.9"/><circle cx="458" cy="629" r="0.8"/><circle cx="1042" cy="736" r="0.9"/><circle cx="626" cy="516" r="1.1"/><circle cx="1150" cy="652" r="0.9"/><circle cx="756" cy="313" r="0.8"/><circle cx="1444" cy="632" r="1.2"/><circle cx="397" cy="672" r="1.2"/><circle cx="941" cy="605" r="1.0"/><circle cx="657" cy="184" r="0.9"/><circle cx="435" cy="336" r="1.2"/><circle cx="1213" cy="673" r="1.2"/><circle cx="704" cy="480" r="1.0"/><circle cx="1324" cy="460" r="0.9"/><circle cx="1150" cy="752" r="0.9"/><circle cx="1433" cy="125" r="0.9"/><circle cx="669" cy="606" r="1.3"/><circle cx="1274" cy="331" r="1.2"/><circle cx="779" cy="273" r="1.3"/><circle cx="1137" cy="572" r="1.1"/><circle cx="1550" cy="425" r="1.2"/><circle cx="1216" cy="681" r="1.0"/><circle cx="1248" cy="491" r="1.0"/><circle cx="640" cy="526" r="0.8"/><circle cx="1469" cy="210" r="0.8"/><circle cx="516" cy="728" r="1.0"/><circle cx="557" cy="134" r="0.8"/><circle cx="1210" cy="533" r="1.1"/><circle cx="1263" cy="158" r="1.1"/><circle cx="820" cy="655" r="1.2"/><circle cx="1446" cy="159" r="1.2"/><circle cx="1473" cy="738" r="0.9"/><circle cx="633" cy="189" r="0.8"/><circle cx="1394" cy="651" r="1.1"/><circle cx="1368" cy="532" r="0.9"/><circle cx="507" cy="180" r="1.2"/><circle cx="632" cy="326" r="1.0"/><circle cx="414" cy="284" r="0.9"/><circle cx="1238" cy="358" r="1.0"/><circle cx="1532" cy="447" r="1.2"/><circle cx="1122" cy="135" r="1.0"/><circle cx="907" cy="625" r="1.0"/><circle cx="1225" cy="470" r="0.9"/><circle cx="1412" cy="175" r="1.2"/><circle cx="591" cy="116" r="0.9"/><circle cx="1293" cy="760" r="0.8"/><circle cx="971" cy="439" r="1.2"/><circle cx="608" cy="441" r="1.0"/><circle cx="1376" cy="287" r="1.3"/><circle cx="726" cy="257" r="1.1"/><circle cx="980" cy="188" r="1.1"/></g>
<g fill="#fff" fill-opacity="0.45" filter="url(#sbl)"><circle cx="485" cy="635" r="1.3"/><circle cx="1322" cy="529" r="1.1"/><circle cx="865" cy="375" r="1.4"/><circle cx="491" cy="701" r="0.9"/><circle cx="633" cy="289" r="1.4"/><circle cx="983" cy="365" r="1.4"/><circle cx="666" cy="419" r="1.2"/><circle cx="1284" cy="612" r="1.3"/><circle cx="802" cy="331" r="1.0"/><circle cx="1389" cy="552" r="1.3"/><circle cx="590" cy="405" r="1.4"/><circle cx="1076" cy="198" r="1.2"/><circle cx="1439" cy="272" r="1.0"/><circle cx="747" cy="579" r="1.4"/><circle cx="572" cy="218" r="1.0"/><circle cx="776" cy="460" r="1.0"/><circle cx="778" cy="240" r="1.5"/><circle cx="1253" cy="182" r="1.5"/><circle cx="510" cy="369" r="1.5"/><circle cx="1332" cy="599" r="1.2"/><circle cx="622" cy="536" r="1.0"/><circle cx="634" cy="371" r="0.9"/><circle cx="862" cy="637" r="1.3"/><circle cx="983" cy="532" r="1.2"/><circle cx="557" cy="513" r="1.1"/><circle cx="1268" cy="714" r="1.2"/><circle cx="1070" cy="609" r="1.2"/><circle cx="660" cy="592" r="1.4"/><circle cx="1307" cy="577" r="1.4"/><circle cx="1195" cy="538" r="1.2"/><circle cx="760" cy="530" r="1.0"/><circle cx="887" cy="631" r="1.3"/><circle cx="1136" cy="280" r="1.2"/><circle cx="929" cy="525" r="1.1"/><circle cx="1190" cy="729" r="1.0"/><circle cx="1165" cy="629" r="1.1"/><circle cx="970" cy="758" r="0.9"/><circle cx="1033" cy="221" r="1.4"/><circle cx="1505" cy="458" r="1.0"/><circle cx="1070" cy="472" r="1.3"/><circle cx="996" cy="537" r="1.4"/><circle cx="1008" cy="386" r="1.5"/><circle cx="638" cy="567" r="1.1"/><circle cx="1294" cy="196" r="1.5"/><circle cx="811" cy="152" r="1.1"/><circle cx="863" cy="124" r="1.2"/><circle cx="888" cy="576" r="1.1"/><circle cx="703" cy="263" r="1.3"/><circle cx="1504" cy="463" r="1.0"/><circle cx="1340" cy="374" r="1.0"/><circle cx="542" cy="628" r="1.4"/><circle cx="1141" cy="425" r="1.2"/><circle cx="657" cy="751" r="1.1"/><circle cx="1147" cy="655" r="1.4"/><circle cx="944" cy="309" r="1.2"/><circle cx="537" cy="665" r="1.1"/><circle cx="1398" cy="292" r="1.1"/><circle cx="690" cy="396" r="1.0"/><circle cx="392" cy="591" r="1.1"/><circle cx="680" cy="314" r="1.2"/><circle cx="897" cy="536" r="1.3"/><circle cx="819" cy="728" r="1.4"/><circle cx="457" cy="661" r="1.4"/><circle cx="1319" cy="208" r="1.4"/><circle cx="1140" cy="125" r="0.9"/><circle cx="1518" cy="548" r="1.1"/><circle cx="509" cy="209" r="1.0"/><circle cx="1310" cy="344" r="1.0"/><circle cx="1461" cy="638" r="1.0"/><circle cx="1446" cy="517" r="1.4"/><circle cx="1182" cy="705" r="1.4"/><circle cx="1384" cy="245" r="1.3"/><circle cx="1019" cy="605" r="1.2"/><circle cx="1436" cy="481" r="1.1"/><circle cx="667" cy="207" r="1.2"/><circle cx="458" cy="423" r="1.0"/><circle cx="972" cy="444" r="1.2"/><circle cx="1412" cy="119" r="1.4"/><circle cx="944" cy="486" r="1.3"/><circle cx="1386" cy="362" r="1.2"/><circle cx="1528" cy="165" r="1.3"/><circle cx="1143" cy="134" r="1.3"/><circle cx="1199" cy="730" r="1.1"/><circle cx="1553" cy="452" r="1.2"/><circle cx="1454" cy="137" r="1.3"/><circle cx="1131" cy="338" r="1.4"/><circle cx="823" cy="428" r="1.2"/><circle cx="1303" cy="254" r="1.2"/><circle cx="890" cy="481" r="1.4"/><circle cx="736" cy="661" r="1.1"/><circle cx="986" cy="294" r="1.2"/><circle cx="1545" cy="547" r="1.4"/><circle cx="781" cy="324" r="1.1"/><circle cx="1085" cy="534" r="1.4"/><circle cx="437" cy="592" r="1.4"/><circle cx="1036" cy="148" r="1.1"/><circle cx="396" cy="240" r="1.5"/><circle cx="1111" cy="549" r="1.4"/><circle cx="1468" cy="519" r="1.3"/><circle cx="1132" cy="575" r="1.3"/><circle cx="1197" cy="255" r="1.3"/><circle cx="932" cy="618" r="1.0"/><circle cx="604" cy="139" r="1.4"/><circle cx="1473" cy="548" r="1.1"/><circle cx="1365" cy="634" r="1.2"/><circle cx="695" cy="314" r="1.2"/><circle cx="767" cy="399" r="1.3"/><circle cx="1497" cy="151" r="1.2"/><circle cx="436" cy="193" r="1.4"/><circle cx="1071" cy="721" r="1.2"/><circle cx="406" cy="371" r="1.3"/><circle cx="1501" cy="762" r="1.2"/><circle cx="878" cy="182" r="1.3"/><circle cx="641" cy="215" r="0.9"/><circle cx="395" cy="566" r="1.0"/><circle cx="1535" cy="173" r="1.4"/><circle cx="542" cy="127" r="1.3"/><circle cx="676" cy="599" r="1.0"/><circle cx="448" cy="626" r="1.3"/><circle cx="1404" cy="597" r="1.0"/><circle cx="1135" cy="583" r="1.2"/><circle cx="1495" cy="283" r="1.5"/><circle cx="1240" cy="123" r="0.9"/><circle cx="1161" cy="654" r="0.9"/><circle cx="758" cy="596" r="1.0"/><circle cx="1410" cy="436" r="0.9"/><circle cx="825" cy="494" r="1.2"/><circle cx="1192" cy="211" r="1.4"/><circle cx="820" cy="541" r="1.3"/><circle cx="885" cy="370" r="1.4"/><circle cx="1510" cy="633" r="1.2"/><circle cx="736" cy="155" r="1.5"/><circle cx="1223" cy="661" r="1.1"/><circle cx="1108" cy="760" r="1.4"/><circle cx="1102" cy="319" r="1.2"/><circle cx="1442" cy="364" r="1.3"/><circle cx="1103" cy="706" r="1.4"/><circle cx="725" cy="116" r="1.1"/><circle cx="890" cy="502" r="1.4"/><circle cx="1441" cy="143" r="1.4"/><circle cx="1352" cy="687" r="1.2"/><circle cx="714" cy="677" r="1.4"/><circle cx="1201" cy="718" r="1.1"/><circle cx="490" cy="480" r="1.4"/><circle cx="627" cy="610" r="1.5"/><circle cx="667" cy="516" r="1.3"/><circle cx="941" cy="251" r="1.1"/><circle cx="1280" cy="637" r="1.2"/><circle cx="493" cy="647" r="1.4"/><circle cx="665" cy="498" r="1.4"/><circle cx="1439" cy="459" r="1.2"/><circle cx="1088" cy="240" r="1.0"/><circle cx="603" cy="578" r="1.1"/><circle cx="1058" cy="381" r="1.2"/><circle cx="566" cy="144" r="1.5"/><circle cx="833" cy="185" r="1.3"/><circle cx="1323" cy="218" r="1.3"/><circle cx="798" cy="458" r="0.9"/><circle cx="429" cy="769" r="1.4"/><circle cx="966" cy="489" r="1.1"/><circle cx="1313" cy="396" r="1.5"/><circle cx="1299" cy="655" r="1.5"/><circle cx="690" cy="140" r="1.0"/><circle cx="603" cy="170" r="0.9"/><circle cx="1050" cy="690" r="1.2"/><circle cx="1512" cy="716" r="0.9"/><circle cx="1098" cy="377" r="1.0"/><circle cx="1527" cy="285" r="1.2"/><circle cx="1149" cy="746" r="1.3"/><circle cx="855" cy="411" r="1.0"/><circle cx="1534" cy="770" r="1.0"/><circle cx="435" cy="284" r="1.1"/><circle cx="1460" cy="712" r="1.4"/><circle cx="445" cy="634" r="1.3"/><circle cx="1156" cy="765" r="0.9"/><circle cx="561" cy="613" r="1.5"/><circle cx="1192" cy="312" r="1.3"/><circle cx="1288" cy="185" r="1.1"/><circle cx="694" cy="197" r="1.2"/><circle cx="589" cy="272" r="1.0"/><circle cx="1193" cy="123" r="1.3"/><circle cx="620" cy="139" r="1.5"/><circle cx="651" cy="731" r="1.4"/><circle cx="1443" cy="207" r="1.2"/><circle cx="504" cy="728" r="1.4"/><circle cx="1134" cy="414" r="1.1"/><circle cx="1365" cy="430" r="1.3"/><circle cx="558" cy="261" r="0.9"/><circle cx="1235" cy="480" r="1.0"/><circle cx="1422" cy="291" r="1.1"/><circle cx="574" cy="294" r="1.4"/><circle cx="786" cy="226" r="1.2"/><circle cx="766" cy="711" r="1.0"/><circle cx="1550" cy="153" r="1.4"/><circle cx="1182" cy="254" r="1.2"/><circle cx="728" cy="285" r="1.0"/><circle cx="821" cy="769" r="1.5"/><circle cx="1486" cy="179" r="1.1"/><circle cx="1452" cy="153" r="1.3"/><circle cx="737" cy="761" r="0.9"/><circle cx="1346" cy="340" r="1.0"/><circle cx="391" cy="664" r="1.2"/><circle cx="609" cy="402" r="1.4"/><circle cx="648" cy="492" r="1.0"/><circle cx="603" cy="623" r="1.3"/><circle cx="622" cy="167" r="1.0"/><circle cx="1111" cy="442" r="1.1"/><circle cx="633" cy="519" r="1.3"/><circle cx="1352" cy="500" r="1.0"/><circle cx="467" cy="599" r="1.1"/><circle cx="1245" cy="152" r="1.4"/><circle cx="787" cy="671" r="1.4"/><circle cx="974" cy="125" r="1.4"/><circle cx="954" cy="691" r="1.1"/><circle cx="610" cy="664" r="1.1"/><circle cx="583" cy="360" r="1.3"/><circle cx="395" cy="458" r="1.2"/><circle cx="1001" cy="195" r="1.3"/><circle cx="1357" cy="686" r="1.1"/><circle cx="1232" cy="367" r="1.4"/><circle cx="462" cy="691" r="1.5"/><circle cx="976" cy="454" r="1.2"/><circle cx="1026" cy="129" r="1.5"/><circle cx="654" cy="235" r="1.0"/><circle cx="686" cy="654" r="0.9"/><circle cx="503" cy="576" r="1.0"/><circle cx="410" cy="511" r="1.2"/><circle cx="1009" cy="579" r="1.0"/><circle cx="1420" cy="588" r="0.9"/><circle cx="535" cy="441" r="1.2"/><circle cx="721" cy="196" r="1.1"/><circle cx="551" cy="506" r="1.4"/><circle cx="564" cy="493" r="1.3"/><circle cx="584" cy="660" r="1.5"/><circle cx="850" cy="393" r="1.4"/><circle cx="1012" cy="376" r="1.5"/><circle cx="1310" cy="338" r="1.0"/><circle cx="786" cy="402" r="1.5"/><circle cx="1343" cy="717" r="1.4"/><circle cx="1394" cy="150" r="1.2"/><circle cx="1525" cy="732" r="1.0"/><circle cx="890" cy="533" r="1.1"/><circle cx="1019" cy="161" r="1.2"/><circle cx="988" cy="129" r="1.0"/><circle cx="1539" cy="628" r="1.5"/><circle cx="1140" cy="649" r="1.4"/><circle cx="1438" cy="138" r="1.3"/><circle cx="704" cy="563" r="1.1"/><circle cx="1032" cy="725" r="1.3"/><circle cx="686" cy="458" r="1.2"/><circle cx="1517" cy="305" r="1.1"/><circle cx="1157" cy="194" r="1.3"/><circle cx="1523" cy="454" r="1.1"/><circle cx="942" cy="467" r="1.0"/><circle cx="536" cy="202" r="1.1"/><circle cx="871" cy="305" r="1.0"/><circle cx="493" cy="476" r="1.4"/><circle cx="1112" cy="491" r="1.3"/><circle cx="628" cy="584" r="1.2"/><circle cx="1039" cy="519" r="1.2"/><circle cx="757" cy="275" r="1.0"/><circle cx="997" cy="368" r="1.3"/><circle cx="403" cy="348" r="1.4"/><circle cx="672" cy="482" r="1.2"/><circle cx="727" cy="767" r="1.1"/><circle cx="1305" cy="220" r="0.9"/><circle cx="1422" cy="405" r="0.9"/><circle cx="849" cy="405" r="1.3"/><circle cx="519" cy="264" r="1.5"/><circle cx="1265" cy="217" r="1.1"/><circle cx="807" cy="561" r="1.3"/><circle cx="1397" cy="657" r="1.2"/><circle cx="1265" cy="606" r="1.4"/><circle cx="953" cy="633" r="1.3"/><circle cx="1474" cy="199" r="1.4"/><circle cx="394" cy="620" r="1.3"/><circle cx="979" cy="750" r="1.2"/><circle cx="885" cy="632" r="1.4"/><circle cx="1109" cy="366" r="1.2"/><circle cx="932" cy="592" r="1.1"/></g>
<g fill="#fff" fill-opacity="0.55" filter="url(#sbl)"><circle cx="852" cy="482" r="1.4"/><circle cx="771" cy="634" r="1.7"/><circle cx="981" cy="408" r="1.2"/><circle cx="750" cy="211" r="1.5"/><circle cx="1079" cy="173" r="1.7"/><circle cx="773" cy="672" r="1.7"/><circle cx="1526" cy="250" r="1.4"/><circle cx="1469" cy="122" r="1.1"/><circle cx="1059" cy="443" r="1.7"/><circle cx="1306" cy="470" r="1.8"/><circle cx="1003" cy="456" r="1.6"/><circle cx="851" cy="351" r="1.5"/><circle cx="805" cy="741" r="1.6"/><circle cx="1012" cy="180" r="1.4"/><circle cx="864" cy="485" r="1.5"/><circle cx="1432" cy="752" r="1.4"/><circle cx="911" cy="527" r="1.8"/><circle cx="796" cy="465" r="1.7"/><circle cx="591" cy="325" r="1.8"/><circle cx="1369" cy="453" r="1.2"/><circle cx="1450" cy="570" r="1.7"/><circle cx="1563" cy="701" r="1.4"/><circle cx="574" cy="306" r="1.5"/><circle cx="988" cy="239" r="1.2"/><circle cx="1136" cy="513" r="1.3"/><circle cx="1568" cy="535" r="1.1"/><circle cx="877" cy="635" r="1.3"/><circle cx="1208" cy="118" r="1.3"/><circle cx="1388" cy="502" r="1.6"/><circle cx="622" cy="444" r="1.5"/><circle cx="704" cy="542" r="1.5"/><circle cx="1572" cy="494" r="1.4"/><circle cx="533" cy="218" r="1.6"/><circle cx="515" cy="181" r="1.2"/><circle cx="1009" cy="658" r="1.5"/><circle cx="1346" cy="156" r="1.1"/><circle cx="1303" cy="328" r="1.6"/><circle cx="809" cy="227" r="1.3"/><circle cx="507" cy="712" r="1.5"/><circle cx="803" cy="412" r="1.4"/><circle cx="454" cy="703" r="1.5"/><circle cx="1527" cy="405" r="1.5"/><circle cx="685" cy="144" r="1.8"/><circle cx="1403" cy="323" r="1.7"/><circle cx="1357" cy="315" r="1.5"/><circle cx="1528" cy="442" r="1.8"/><circle cx="677" cy="372" r="1.6"/><circle cx="652" cy="319" r="1.7"/><circle cx="963" cy="638" r="1.3"/><circle cx="595" cy="352" r="1.2"/><circle cx="1541" cy="307" r="1.5"/><circle cx="525" cy="467" r="1.4"/><circle cx="867" cy="158" r="1.2"/><circle cx="1368" cy="347" r="1.3"/><circle cx="616" cy="302" r="1.3"/><circle cx="430" cy="553" r="1.3"/><circle cx="574" cy="581" r="1.2"/><circle cx="709" cy="666" r="1.2"/><circle cx="915" cy="667" r="1.7"/><circle cx="578" cy="348" r="1.6"/><circle cx="836" cy="748" r="1.2"/><circle cx="1517" cy="448" r="1.3"/><circle cx="926" cy="201" r="1.6"/><circle cx="698" cy="709" r="1.5"/><circle cx="825" cy="278" r="1.5"/><circle cx="641" cy="691" r="1.2"/><circle cx="997" cy="473" r="1.3"/><circle cx="1304" cy="369" r="1.6"/><circle cx="1062" cy="320" r="1.4"/><circle cx="491" cy="232" r="1.7"/><circle cx="770" cy="552" r="1.2"/><circle cx="1056" cy="354" r="1.5"/><circle cx="741" cy="159" r="1.3"/><circle cx="658" cy="198" r="1.6"/><circle cx="724" cy="381" r="1.7"/><circle cx="1308" cy="698" r="1.7"/><circle cx="546" cy="298" r="1.1"/><circle cx="1195" cy="553" r="1.3"/><circle cx="878" cy="550" r="1.6"/><circle cx="684" cy="674" r="1.3"/><circle cx="1135" cy="235" r="1.2"/><circle cx="1471" cy="599" r="1.6"/><circle cx="437" cy="141" r="1.2"/><circle cx="624" cy="315" r="1.4"/><circle cx="436" cy="320" r="1.5"/><circle cx="602" cy="669" r="1.5"/><circle cx="1239" cy="283" r="1.4"/><circle cx="1201" cy="345" r="1.1"/><circle cx="1378" cy="627" r="1.3"/><circle cx="440" cy="679" r="1.5"/><circle cx="445" cy="276" r="1.2"/><circle cx="1328" cy="254" r="1.7"/><circle cx="1278" cy="172" r="1.6"/><circle cx="856" cy="608" r="1.7"/><circle cx="722" cy="174" r="1.8"/><circle cx="892" cy="729" r="1.6"/><circle cx="1265" cy="663" r="1.5"/><circle cx="926" cy="151" r="1.6"/><circle cx="897" cy="453" r="1.7"/><circle cx="540" cy="618" r="1.1"/><circle cx="1222" cy="647" r="1.3"/><circle cx="1037" cy="755" r="1.5"/><circle cx="1034" cy="280" r="1.1"/><circle cx="813" cy="387" r="1.2"/><circle cx="757" cy="205" r="1.6"/><circle cx="1184" cy="272" r="1.3"/><circle cx="1000" cy="409" r="1.8"/><circle cx="806" cy="313" r="1.7"/><circle cx="557" cy="487" r="1.3"/><circle cx="1356" cy="477" r="1.6"/><circle cx="590" cy="555" r="1.5"/><circle cx="936" cy="621" r="1.7"/><circle cx="525" cy="306" r="1.4"/><circle cx="634" cy="155" r="1.3"/><circle cx="623" cy="578" r="1.4"/><circle cx="523" cy="329" r="1.4"/><circle cx="819" cy="226" r="1.2"/><circle cx="402" cy="770" r="1.6"/><circle cx="489" cy="588" r="1.8"/><circle cx="1057" cy="187" r="1.4"/><circle cx="904" cy="240" r="1.5"/><circle cx="399" cy="722" r="1.6"/><circle cx="1134" cy="732" r="1.6"/><circle cx="687" cy="277" r="1.2"/><circle cx="422" cy="626" r="1.7"/><circle cx="740" cy="238" r="1.5"/><circle cx="1392" cy="727" r="1.2"/><circle cx="1320" cy="663" r="1.6"/><circle cx="776" cy="237" r="1.7"/><circle cx="769" cy="358" r="1.5"/></g>
<g fill="#fff" fill-opacity="0.7" filter="url(#sbl)"><circle cx="827" cy="664" r="1.5"/><circle cx="438" cy="489" r="1.7"/><circle cx="1361" cy="581" r="1.9"/><circle cx="1510" cy="441" r="1.6"/><circle cx="576" cy="313" r="1.7"/><circle cx="484" cy="569" r="1.4"/><circle cx="915" cy="755" r="1.4"/><circle cx="436" cy="405" r="1.4"/><circle cx="1246" cy="117" r="1.9"/><circle cx="1403" cy="634" r="1.6"/><circle cx="725" cy="552" r="1.7"/><circle cx="889" cy="339" r="1.6"/><circle cx="1179" cy="660" r="1.9"/><circle cx="584" cy="310" r="1.6"/><circle cx="1057" cy="345" r="1.4"/><circle cx="490" cy="329" r="1.6"/><circle cx="1541" cy="715" r="1.9"/><circle cx="1545" cy="750" r="1.7"/><circle cx="1351" cy="155" r="1.8"/><circle cx="1111" cy="311" r="1.7"/><circle cx="1519" cy="432" r="1.8"/><circle cx="744" cy="342" r="1.9"/><circle cx="422" cy="240" r="1.8"/><circle cx="920" cy="171" r="1.8"/><circle cx="830" cy="498" r="1.6"/><circle cx="1018" cy="488" r="1.6"/><circle cx="525" cy="234" r="1.9"/><circle cx="1039" cy="189" r="1.9"/><circle cx="690" cy="178" r="1.7"/><circle cx="687" cy="438" r="1.7"/><circle cx="658" cy="493" r="1.4"/><circle cx="998" cy="503" r="1.4"/><circle cx="873" cy="163" r="1.6"/><circle cx="1413" cy="478" r="1.8"/><circle cx="1287" cy="191" r="2.0"/><circle cx="1245" cy="182" r="1.9"/><circle cx="854" cy="228" r="2.0"/><circle cx="1057" cy="626" r="1.4"/><circle cx="1310" cy="153" r="1.5"/><circle cx="831" cy="125" r="1.7"/><circle cx="642" cy="313" r="1.8"/><circle cx="894" cy="701" r="1.7"/><circle cx="1423" cy="487" r="1.9"/><circle cx="1422" cy="226" r="1.8"/><circle cx="794" cy="619" r="1.8"/></g>
<g fill="#fff" filter="url(#glow)"><circle cx="577" cy="134" r="2.2"/><circle cx="573" cy="158" r="2.0"/><circle cx="835" cy="136" r="2.4"/><circle cx="586" cy="239" r="2.6"/><circle cx="669" cy="213" r="2.0"/><circle cx="559" cy="349" r="3.2"/><circle cx="566" cy="349" r="2.4"/><circle cx="582" cy="306" r="2.6"/><circle cx="505" cy="355" r="2.4"/><circle cx="478" cy="371" r="2.4"/><circle cx="540" cy="404" r="2.6"/><circle cx="624" cy="295" r="2.0"/><circle cx="556" cy="204" r="1.8"/><circle cx="828" cy="197" r="2.0"/><circle cx="539" cy="343" r="2.0"/><circle cx="575" cy="347" r="2.0"/><circle cx="530" cy="441" r="2.2"/><circle cx="527" cy="483" r="2.0"/><circle cx="427" cy="531" r="2.4"/><circle cx="403" cy="613" r="2.0"/><circle cx="412" cy="623" r="1.8"/><circle cx="425" cy="637" r="2.0"/><circle cx="497" cy="632" r="1.8"/><circle cx="673" cy="595" r="2.0"/><circle cx="591" cy="701" r="2.4"/><circle cx="639" cy="721" r="2.0"/><circle cx="703" cy="687" r="1.8"/><circle cx="660" cy="687" r="1.8"/><circle cx="447" cy="666" r="1.8"/><circle cx="539" cy="482" r="1.8"/><circle cx="605" cy="481" r="1.8"/><circle cx="584" cy="498" r="1.8"/><circle cx="606" cy="516" r="1.8"/><circle cx="554" cy="547" r="1.8"/><circle cx="464" cy="573" r="1.8"/><circle cx="687" cy="524" r="1.8"/><circle cx="1423" cy="344" r="2.0"/><circle cx="1468" cy="265" r="2.2"/><circle cx="1518" cy="246" r="2.2"/><circle cx="1391" cy="285" r="1.8"/><circle cx="1348" cy="295" r="1.8"/><circle cx="1387" cy="195" r="1.8"/><circle cx="1207" cy="237" r="1.8"/><circle cx="1332" cy="293" r="1.8"/><circle cx="1565" cy="385" r="1.8"/><circle cx="1408" cy="319" r="1.8"/><circle cx="1392" cy="351" r="1.8"/><circle cx="1300" cy="230" r="1.6"/><circle cx="1261" cy="470" r="1.8"/><circle cx="1334" cy="577" r="1.8"/><circle cx="1451" cy="642" r="1.8"/><circle cx="1083" cy="136" r="1.6"/><circle cx="850" cy="137" r="1.6"/><circle cx="906" cy="150" r="1.6"/></g>
<g id="grid" mask="url(#gmask)" stroke="#fff" stroke-opacity=".27" stroke-width="1" fill="none"><path d="M648688.6 11341.8L2226.7 178.5"/><path d="M-460500.4 8132.3L-262.0 178.5"/><path d="M551629.4 9827.9L2211.7 178.4"/><path d="M-635348.3 11341.8L-247.0 178.4"/><path d="M477731.8 8675.3L2196.9 178.4"/><path d="M-539830.4 9827.9L-232.2 178.4"/><path d="M676535.3 12440.8L2182.3 178.3"/><path d="M-467106.3 8675.3L-217.7 178.3"/><path d="M567242.1 10638.5L2168.0 178.2"/><path d="M-662076.1 12440.8L-203.3 178.2"/><path d="M485938.3 9297.8L2153.9 178.1"/><path d="M-554617.8 10638.5L-189.2 178.1"/><path d="M423092.4 8261.5L2140.0 178.0"/><path d="M-474679.0 9297.8L-175.4 178.0"/><path d="M585715.0 11597.7L2126.3 178.0"/><path d="M-412888.3 8261.5L-161.7 178.0"/><path d="M495440.4 10018.6L2112.9 177.9"/><path d="M-572114.3 11597.7L-148.2 177.9"/><path d="M427082.0 8822.8L2099.6 177.8"/><path d="M-483447.3 10018.6L-135.0 177.8"/><path d="M607913.6 12750.2L2086.5 177.7"/><path d="M-416306.3 8822.8L-121.9 177.7"/><path d="M506571.5 10862.9L2073.7 177.7"/><path d="M-593139.4 12750.2L-109.1 177.7"/><path d="M431666.2 9467.9L2061.0 177.6"/><path d="M-493718.8 10862.9L-96.4 177.6"/><path d="M374046.6 8394.9L2048.5 177.5"/><path d="M-420233.8 9467.9L-83.9 177.5"/><path d="M519789.6 11865.5L2036.2 177.5"/><path d="M-363706.6 8394.9L-71.6 177.5"/><path d="M436988.8 10216.9L2024.0 177.4"/><path d="M-505916.1 11865.5L-59.5 177.4"/><path d="M374644.5 8975.6L2012.1 177.3"/><path d="M-424793.8 10216.9L-47.5 177.3"/><path d="M326009.2 8007.2L2000.3 177.3"/><path d="M-363713.3 8975.6L-35.7 177.3"/><path d="M443243.9 11097.1L1988.6 177.2"/><path d="M-316064.0 8007.2L-24.1 177.2"/><path d="M375333.2 9644.5L1977.2 177.1"/><path d="M-430152.7 11097.1L-12.6 177.1"/><path d="M323356.7 8532.7L1965.8 177.1"/><path d="M-363721.0 9644.5L-1.3 177.1"/><path d="M450699.9 12146.3L1954.7 177.0"/><path d="M-312876.4 8532.7L9.8 177.0"/><path d="M376135.1 10423.4L1943.7 176.9"/><path d="M-436540.5 12146.3L20.8 176.9"/><path d="M320323.0 9133.8L1932.8 176.9"/><path d="M-363729.9 10423.4L31.7 176.9"/><path d="M276979.5 8132.3L1922.1 176.8"/><path d="M-309230.8 9133.8L42.4 176.8"/><path d="M377080.7 11341.8L1911.6 176.8"/><path d="M-266906.9 8132.3L52.9 176.8"/><path d="M316819.6 9827.9L1901.1 176.7"/><path d="M-363740.5 11341.8L63.3 176.7"/><path d="M270938.9 8675.3L1890.9 176.6"/><path d="M-305020.6 9827.9L73.6 176.6"/><path d="M378212.3 12440.8L1880.7 176.6"/><path d="M-260313.4 8675.3L83.8 176.6"/><path d="M312728.2 10638.5L1870.7 176.5"/><path d="M-363753.1 12440.8L93.8 176.5"/><path d="M264014.2 9297.8L1860.8 176.5"/><path d="M-300103.9 10638.5L103.7 176.5"/><path d="M226359.6 8261.5L1851.0 176.4"/><path d="M-252755.0 9297.8L113.4 176.4"/><path d="M307887.2 11597.7L1841.4 176.4"/><path d="M-216155.5 8261.5L123.0 176.4"/><path d="M255996.3 10018.6L1831.9 176.3"/><path d="M-294286.4 11597.7L132.5 176.3"/><path d="M216703.0 8822.8L1822.5 176.3"/><path d="M-244003.2 10018.6L141.9 176.3"/><path d="M302069.9 12750.2L1813.2 176.2"/><path d="M-205927.3 8822.8L151.2 176.2"/><path d="M246603.8 10862.9L1804.1 176.2"/><path d="M-287295.7 12750.2L160.3 176.2"/><path d="M205607.0 9467.9L1795.0 176.1"/><path d="M-233751.1 10862.9L169.4 176.1"/><path d="M174070.9 8394.9L1786.1 176.1"/><path d="M-194174.6 9467.9L178.3 176.1"/><path d="M235450.3 11865.5L1777.3 176.0"/><path d="M-163731.0 8394.9L187.1 176.0"/><path d="M192723.7 10216.9L1768.6 176.0"/><path d="M-221576.8 11865.5L195.8 176.0"/><path d="M160553.0 8975.6L1760.0 175.9"/><path d="M-180528.7 10216.9L204.4 175.9"/><path d="M135456.4 8007.2L1751.5 175.9"/><path d="M-149621.8 8975.6L212.9 175.9"/><path d="M177583.5 11097.1L1743.0 175.8"/><path d="M-125511.2 8007.2L221.3 175.8"/><path d="M144981.8 9644.5L1734.7 175.8"/><path d="M-164492.4 11097.1L229.6 175.8"/><path d="M120029.5 8532.7L1726.5 175.7"/><path d="M-133369.6 9644.5L237.8 175.7"/><path d="M159536.5 12146.3L1718.4 175.7"/><path d="M-109549.2 8532.7L246.0 175.7"/><path d="M126850.9 10423.4L1710.4 175.6"/><path d="M-145377.2 12146.3L254.0 175.6"/><path d="M102385.6 9133.8L1702.5 175.6"/><path d="M-114445.7 10423.4L261.9 175.6"/><path d="M83385.9 8132.3L1694.7 175.5"/><path d="M-91293.4 9133.8L269.7 175.5"/><path d="M105472.8 11341.8L1686.9 175.5"/><path d="M-73313.3 8132.3L277.4 175.5"/><path d="M82009.8 9827.9L1679.3 175.5"/><path d="M-92132.6 11341.8L285.1 175.5"/><path d="M64145.9 8675.3L1671.7 175.4"/><path d="M-70210.9 9827.9L292.7 175.4"/><path d="M79889.2 12440.8L1664.2 175.4"/><path d="M-53520.4 8675.3L300.1 175.4"/><path d="M58214.3 10638.5L1656.8 175.3"/><path d="M-65430.0 12440.8L307.5 175.3"/><path d="M42090.2 9297.8L1649.5 175.3"/><path d="M-45590.0 10638.5L314.8 175.3"/><path d="M29626.7 8261.5L1642.3 175.3"/><path d="M-30831.0 9297.8L322.1 175.3"/><path d="M30059.4 11597.7L1635.1 175.2"/><path d="M-19422.6 8261.5L329.2 175.2"/><path d="M16552.1 10018.6L1628.1 175.2"/><path d="M-16458.6 11597.7L336.3 175.2"/><path d="M6324.1 8822.8L1621.1 175.1"/><path d="M-4559.1 10018.6L343.3 175.1"/><path d="M-3773.8 12750.2L1614.1 175.1"/><path d="M4451.6 8822.8L350.2 175.1"/><path d="M-13363.9 10862.9L1607.3 175.1"/><path d="M18548.0 12750.2L357.0 175.1"/><path d="M-20452.2 9467.9L1600.5 175.0"/><path d="M26216.6 10862.9L363.8 175.0"/><path d="M-25904.8 8394.9L1593.8 175.0"/><path d="M31884.6 9467.9L370.5 175.0"/><path d="M-48889.0 11865.5L1587.2 174.9"/><path d="M36244.7 8394.9L377.1 174.9"/><path d="M-51541.4 10216.9L1580.6 174.9"/><path d="M62762.5 11865.5L383.7 174.9"/><path d="M-53538.5 8975.6L1574.1 174.9"/><path d="M63736.4 10216.9L390.2 174.9"/><path d="M-55096.4 8007.2L1567.7 174.8"/><path d="M64469.6 8975.6L396.6 174.8"/><path d="M-88076.8 11097.1L1561.4 174.8"/><path d="M65041.7 8007.2L402.9 174.8"/><path d="M-85369.6 9644.5L1555.1 174.8"/><path d="M101167.9 11097.1L409.2 174.8"/><path d="M-83297.7 8532.7L1548.9 174.7"/><path d="M96981.9 9644.5L415.4 174.7"/><path d="M-131626.9 12146.3L1542.7 174.7"/><path d="M93778.0 8532.7L421.6 174.7"/><path d="M-122433.3 10423.4L1536.6 174.7"/><path d="M145786.2 12146.3L427.7 174.7"/><path d="M-115551.7 9133.8L1530.6 174.6"/><path d="M134838.5 10423.4L433.7 174.6"/><path d="M-110207.6 8132.3L1524.6 174.6"/><path d="M126644.0 9133.8L439.7 174.6"/><path d="M-166135.1 11341.8L1518.7 174.6"/><path d="M120280.2 8132.3L445.6 174.6"/><path d="M-152800.0 9827.9L1512.8 174.5"/><path d="M179475.3 11341.8L451.5 174.5"/><path d="M-142647.1 8675.3L1507.0 174.5"/><path d="M164598.9 9827.9L457.2 174.5"/><path d="M-218433.8 12440.8L1501.3 174.5"/><path d="M153272.6 8675.3L463.0 174.5"/><path d="M-196299.6 10638.5L1495.6 174.4"/><path d="M232893.0 12440.8L468.7 174.4"/><path d="M-179833.8 9297.8L1490.0 174.4"/><path d="M208923.8 10638.5L474.3 174.4"/><path d="M-167106.1 8261.5L1484.4 174.4"/><path d="M191093.0 9297.8L479.9 174.4"/><path d="M-247768.5 11597.7L1478.9 174.3"/><path d="M177310.3 8261.5L485.4 174.3"/><path d="M-222892.0 10018.6L1473.4 174.3"/><path d="M261369.2 11597.7L490.8 174.3"/><path d="M-204054.9 8822.8L1468.0 174.3"/><path d="M234885.1 10018.6L496.2 174.3"/><path d="M-309617.5 12750.2L1462.6 174.2"/><path d="M214830.5 8822.8L501.6 174.2"/><path d="M-273331.5 10862.9L1457.3 174.2"/><path d="M324391.7 12750.2L506.9 174.2"/><path d="M-246511.4 9467.9L1452.1 174.2"/><path d="M286184.2 10862.9L512.2 174.2"/><path d="M-225880.5 8394.9L1446.9 174.2"/><path d="M257943.8 9467.9L517.4 174.2"/><path d="M-333228.4 11865.5L1441.7 174.1"/><path d="M236220.4 8394.9L522.5 174.1"/><path d="M-295806.5 10216.9L1436.6 174.1"/><path d="M347101.9 11865.5L527.6 174.1"/><path d="M-267629.9 8975.6L1431.5 174.1"/><path d="M308001.5 10216.9L532.7 174.1"/><path d="M-245649.2 8007.2L1426.5 174.0"/><path d="M278561.1 8975.6L537.7 174.0"/><path d="M-353737.1 11097.1L1421.5 174.0"/><path d="M255594.5 8007.2L542.7 174.0"/><path d="M-315721.0 9644.5L1416.6 174.0"/><path d="M366828.3 11097.1L547.6 174.0"/><path d="M-286624.9 8532.7L1411.7 174.0"/><path d="M327333.3 9644.5L552.5 174.0"/><path d="M-422790.3 12146.3L1406.9 173.9"/><path d="M297105.2 8532.7L557.3 173.9"/><path d="M-371717.5 10423.4L1402.1 173.9"/><path d="M436949.6 12146.3L562.1 173.9"/><path d="M-333489.1 9133.8L1397.3 173.9"/><path d="M384122.7 10423.4L566.9 173.9"/><path d="M-303801.1 8132.3L1392.6 173.9"/><path d="M344581.4 9133.8L571.6 173.9"/><path d="M-437742.9 11341.8L1388.0 173.8"/><path d="M313873.7 8132.3L576.2 173.8"/><path d="M-387609.8 9827.9L1383.3 173.8"/><path d="M451083.2 11341.8L580.9 173.8"/><path d="M-349440.1 8675.3L1378.8 173.8"/><path d="M399408.7 9827.9L585.5 173.8"/><path d="M-516756.9 12440.8L1374.2 173.8"/><path d="M360065.5 8675.3L590.0 173.8"/><path d="M-450813.4 10638.5L1369.7 173.7"/><path d="M531216.1 12440.8L594.5 173.7"/><path d="M-401757.8 9297.8L1365.3 173.7"/><path d="M463437.7 10638.5L599.0 173.7"/><path d="M-363839.0 8261.5L1360.8 173.7"/><path d="M413017.0 9297.8L603.4 173.7"/><path d="M-525596.3 11597.7L1356.4 173.7"/><path d="M374043.1 8261.5L607.8 173.7"/><path d="M-462336.1 10018.6L1352.1 173.6"/><path d="M539197.1 11597.7L612.1 173.6"/><path d="M-414433.8 8822.8L1347.8 173.6"/><path d="M474329.2 10018.6L616.4 173.6"/><path d="M-615461.2 12750.2L1343.5 173.6"/><path d="M425209.5 8822.8L620.7 173.6"/><path d="M-533299.2 10862.9L1339.3 173.6"/><path d="M630235.4 12750.2L624.9 173.6"/><path d="M-472570.6 9467.9L1335.1 173.5"/><path d="M546151.9 10862.9L629.1 173.5"/><path d="M-425856.1 8394.9L1330.9 173.5"/><path d="M484003.0 9467.9L633.3 173.5"/><path d="M-617567.7 11865.5L1326.8 173.5"/><path d="M436196.1 8394.9L637.4 173.5"/><path d="M-540071.6 10216.9L1322.7 173.5"/><path d="M631441.2 11865.5L641.5 173.5"/><path d="M-481721.4 8975.6L1318.6 173.4"/><path d="M552266.6 10216.9L645.6 173.4"/><path d="M-436202.0 8007.2L1314.6 173.4"/><path d="M492652.6 8975.6L649.6 173.4"/><path d="M-619397.5 11097.1L1310.6 173.4"/><path d="M446147.3 8007.2L653.6 173.4"/><path d="M-546072.5 9644.5L1306.6 173.4"/><path d="M632488.6 11097.1L657.6 173.4"/><path d="M-489952.0 8532.7L1302.7 173.4"/><path d="M557684.7 9644.5L661.5 173.4"/><path d="M-713953.7 12146.3L1298.8 173.3"/><path d="M500432.4 8532.7L665.4 173.3"/><path d="M-621001.7 10423.4L1294.9 173.3"/><path d="M728113.0 12146.3L669.3 173.3"/><path d="M-551426.5 9133.8L1291.1 173.3"/><path d="M633406.9 10423.4L673.1 173.3"/><path d="M-497394.7 8132.3L1287.3 173.3"/><path d="M562518.8 9133.8L676.9 173.3"/><path d="M-709350.8 11341.8L1283.5 173.2"/><path d="M507467.3 8132.3L680.7 173.2"/><path d="M-622419.5 9827.9L1279.7 173.2"/><path d="M722691.1 11341.8L684.4 173.2"/><path d="M-556233.0 8675.3L1276.0 173.2"/><path d="M634218.5 9827.9L688.1 173.2"/><path d="M-815079.9 12440.8L1272.3 173.2"/><path d="M566858.5 8675.3L691.8 173.2"/><path d="M-705327.3 10638.5L1268.7 173.2"/><path d="M829539.1 12440.8L695.5 173.2"/><path d="M-623681.8 9297.8L1265.1 173.1"/><path d="M717951.6 10638.5L699.1 173.1"/><path d="M-560571.9 8261.5L1261.5 173.1"/><path d="M634941.1 9297.8L702.7 173.1"/><path d="M-803424.1 11597.7L1257.9 173.1"/><path d="M570776.0 8261.5L706.3 173.1"/><path d="M-701780.3 10018.6L1254.4 173.1"/><path d="M817024.9 11597.7L709.8 173.1"/><path d="M-624812.7 8822.8L1250.8 173.1"/><path d="M713773.4 10018.6L713.3 173.1"/><path d="M-921304.9 12750.2L1247.3 173.0"/><path d="M635588.4 8822.8L716.8 173.0"/><path d="M-793266.9 10862.9L1243.9 173.0"/><path d="M936079.1 12750.2L720.3 173.0"/><path d="M-698629.8 9467.9L1240.5 173.0"/><path d="M806119.6 10862.9L723.7 173.0"/><path d="M-278963.4 3846.9L1237.0 173.0"/><path d="M248210.0 3415.9L727.1 173.0"/><path d="M-72853.2 1132.1L1233.7 173.0"/><path d="M72357.4 1099.7L730.5 173.0"/><path d="M-41772.4 722.8L1230.3 172.9"/><path d="M42910.2 711.9L733.9 172.9"/><path d="M-29218.8 557.4L1227.0 172.9"/><path d="M30773.3 552.0L737.2 172.9"/><path d="M-22430.1 468.0L1223.7 172.9"/><path d="M24150.3 464.8L740.5 172.9"/><path d="M-18176.8 412.0L1220.4 172.9"/><path d="M19979.3 409.9L743.8 172.9"/><path d="M-15262.1 373.6L1217.1 172.9"/><path d="M17111.2 372.1L747.0 172.9"/><path d="M-13139.9 345.6L1213.9 172.9"/><path d="M15018.1 344.5L750.3 172.9"/><path d="M-11525.7 324.4L1210.7 172.8"/><path d="M13423.2 323.5L753.5 172.8"/><path d="M-10256.6 307.7L1207.5 172.8"/><path d="M12167.5 307.0L756.7 172.8"/><path d="M-9232.7 294.2L1204.3 172.8"/><path d="M11153.3 293.6L759.8 172.8"/><path d="M-8389.0 283.1L1201.2 172.8"/><path d="M10316.9 282.6L763.0 172.8"/><path d="M-7682.0 273.7L1198.1 172.8"/><path d="M9615.5 273.3L766.1 172.8"/><path d="M-7080.8 265.8L1195.0 172.7"/><path d="M9018.7 265.5L769.2 172.7"/><path d="M-6563.4 259.0L1191.9 172.7"/><path d="M8504.8 258.7L772.2 172.7"/><path d="M-6113.4 253.1L1188.9 172.7"/><path d="M8057.6 252.8L775.3 172.7"/><path d="M-5718.4 247.9L1185.8 172.7"/><path d="M7664.9 247.7L778.3 172.7"/><path d="M-5368.9 243.3L1182.8 172.7"/><path d="M7317.4 243.1L781.3 172.7"/><path d="M-5057.5 239.2L1179.8 172.7"/><path d="M7007.7 239.0L784.3 172.7"/><path d="M-4778.3 235.5L1176.9 172.6"/><path d="M6729.8 235.3L787.3 172.6"/><path d="M-4526.5 232.2L1173.9 172.6"/><path d="M6479.2 232.0L790.2 172.6"/><path d="M-4298.3 229.2L1171.0 172.6"/><path d="M6252.1 229.0L793.1 172.6"/><path d="M-4090.5 226.4L1168.1 172.6"/><path d="M6045.2 226.3L796.0 172.6"/><path d="M-3900.5 223.9L1165.2 172.6"/><path d="M5856.0 223.8L798.9 172.6"/><path d="M-3726.1 221.6L1162.4 172.6"/><path d="M5682.3 221.5L801.8 172.6"/><path d="M-3565.5 219.5L1159.5 172.6"/><path d="M5522.2 219.4L804.6 172.5"/><path d="M-3417.0 217.6L1156.7 172.5"/><path d="M5374.3 217.5L807.4 172.5"/><path d="M-3279.4 215.8L1153.9 172.5"/><path d="M5237.2 215.7L810.2 172.5"/><path d="M-3151.6 214.1L1151.1 172.5"/><path d="M5109.8 214.0L813.0 172.5"/><path d="M-3032.4 212.5L1148.4 172.5"/><path d="M4991.0 212.4L815.8 172.5"/><path d="M-2921.1 211.0L1145.6 172.5"/><path d="M4880.0 211.0L818.5 172.5"/><path d="M-2816.8 209.7L1142.9 172.5"/><path d="M4776.1 209.6L821.2 172.5"/></g>
<defs><linearGradient id="cyl" x1="0" y1="0" x2="1" y2="0"><stop offset="0" stop-color="#8d9094"/><stop offset=".35" stop-color="#6d7074"/><stop offset="1" stop-color="#25272a"/></linearGradient><linearGradient id="wpan" x1="0" y1="0" x2="1" y2="0"><stop offset="0" stop-color="#d6d2c4"/><stop offset=".45" stop-color="#bdb8a8"/><stop offset=".85" stop-color="#2c2a26"/><stop offset="1" stop-color="#0a0a0a"/></linearGradient><linearGradient id="fin" x1="0" y1="0" x2="1" y2="1"><stop offset="0" stop-color="#e2dece"/><stop offset="1" stop-color="#b4ae9c"/></linearGradient><linearGradient id="redg" x1="0" y1="0" x2="0" y2="1"><stop offset="0" stop-color="#8e3434"/><stop offset="1" stop-color="#5a1e1e"/></linearGradient><linearGradient id="wing" x1="0" y1="0" x2="1" y2="1"><stop offset="0" stop-color="#cfcabb"/><stop offset="1" stop-color="#8f8a7c"/></linearGradient><linearGradient id="hd1" x1="0" y1="0" x2="1" y2="1"><stop offset="0" stop-color="#d2cabc"/><stop offset="1" stop-color="#a89f8e"/></linearGradient><linearGradient id="hd2" x1="0" y1="0" x2="0" y2="1"><stop offset="0" stop-color="#c9c1b1"/><stop offset="1" stop-color="#8f8777"/></linearGradient><linearGradient id="nk" x1="0" y1="0" x2="0" y2="1"><stop offset="0" stop-color="#c4bcac"/><stop offset=".35" stop-color="#ece6d8"/><stop offset="1" stop-color="#cfc8b8"/></linearGradient><filter id="sb" x="-10%" y="-10%" width="120%" height="120%"><feGaussianBlur stdDeviation=".6"/></filter></defs>
<clipPath id="shipclip"><polygon points="996.4,251.2 1018.6,248.6 1033.5,248.0 1035.6,253.3 1050.8,270.2 1048.3,285.1 1038.7,284.7 1037.7,291.4 1041.5,297.8 1040.9,323.2 1056.8,340.2 1065.2,352.9 1063.1,369.8 1082.2,410.1 1064.2,432.9 1052.9,436.5 1062.7,435.0 1067.3,445.0 1086.4,443.9 1088.5,454.5 1088.1,463.0 1118.2,471.5 1117.8,470.5 1119.8,483.7 1104.6,496.9 1096.4,510.2 1092.4,511.2 1091.4,500.0 1086.3,499.0 1081.2,515.3 1072.0,518.3 1069.0,537.6 1062.9,539.1 1060.8,562.0 1055.8,578.3 1048.6,591.5 1037.5,600.7 1025.3,602.7 1015.1,609.8 1004.9,603.7 1003.9,625.1 986.6,638.3 974.4,638.3 954.1,623.0 948.0,600.7 943.9,599.7 941.9,619.0 932.7,626.1 930.7,612.9 919.5,622.0 913.4,621.0 909.3,610.8 893.1,625.1 891.0,643.4 866.6,660.7 862.5,655.6 848.3,667.8 844.2,663.7 841.2,643.4 911.4,562.0 908.3,545.8 911.4,533.6 919.5,520.3 929.7,515.3 927.6,501.0 926.6,472.5 930.7,452.2 930.1,440.0 931.8,430.2 939.2,416.4 938.1,391.0 943.4,387.8 943.0,314.7 945.5,311.6 962.5,311.6 966.1,314.7 966.9,358.2 978.4,374.0 981.6,348.6 984.7,323.2 989.0,297.8 985.4,296.1 984.7,283.0 989.0,268.1"/></clipPath>
<polygon points="996.4,251.2 1018.6,248.6 1033.5,248.0 1035.6,253.3 1050.8,270.2 1048.3,285.1 1038.7,284.7 1037.7,291.4 1041.5,297.8 1040.9,323.2 1056.8,340.2 1065.2,352.9 1063.1,369.8 1082.2,410.1 1064.2,432.9 1052.9,436.5 1062.7,435.0 1067.3,445.0 1086.4,443.9 1088.5,454.5 1088.1,463.0 1118.2,471.5 1117.8,470.5 1119.8,483.7 1104.6,496.9 1096.4,510.2 1092.4,511.2 1091.4,500.0 1086.3,499.0 1081.2,515.3 1072.0,518.3 1069.0,537.6 1062.9,539.1 1060.8,562.0 1055.8,578.3 1048.6,591.5 1037.5,600.7 1025.3,602.7 1015.1,609.8 1004.9,603.7 1003.9,625.1 986.6,638.3 974.4,638.3 954.1,623.0 948.0,600.7 943.9,599.7 941.9,619.0 932.7,626.1 930.7,612.9 919.5,622.0 913.4,621.0 909.3,610.8 893.1,625.1 891.0,643.4 866.6,660.7 862.5,655.6 848.3,667.8 844.2,663.7 841.2,643.4 911.4,562.0 908.3,545.8 911.4,533.6 919.5,520.3 929.7,515.3 927.6,501.0 926.6,472.5 930.7,452.2 930.1,440.0 931.8,430.2 939.2,416.4 938.1,391.0 943.4,387.8 943.0,314.7 945.5,311.6 962.5,311.6 966.1,314.7 966.9,358.2 978.4,374.0 981.6,348.6 984.7,323.2 989.0,297.8 985.4,296.1 984.7,283.0 989.0,268.1" fill="#050506" stroke="#8ba2cf" stroke-width="1.400" stroke-linejoin="round"/>
<g filter="url(#sb)">
<polygon points="985.9,282.4 988.2,265.4 998.0,251.4 1008.1,248.5 1008.3,255.1 994.6,268.4 988.2,284.5" fill="url(#hd1)" />
<polygon points="1008.1,248.5 1032.7,248.5 1034.8,251.0 1032.3,252.9 1019.6,256.1 1017.6,265.4 1016.2,279.8 1008.6,284.2 1008.6,255.3" fill="url(#hd2)" />
<polygon points="995.4,268.1 1008.1,255.8 1008.6,265.8 988.8,287.6 987.8,283.4" fill="#8c322e" />
<polygon points="999.2,294.4 1006.6,290.8 1007.5,298.6 999.8,298.6" fill="#b8b0a0" />
<path d="M1020.2,273.9 L1019.2,258.0 L1031.0,256.6 M1021.7,262.2 L1030.3,261.0" fill="none" stroke="#6e685c" stroke-width="1"/>
<polygon points="989.8,298.2 1000.0,299.9 995.7,348.6 993.2,366.0 982.2,367.7 982.2,348.6 985.2,323.2" fill="url(#nk)" />
<polygon points="1000.0,299.9 1007.6,304.1 1011.0,308.8 1012.3,344.4 1005.1,345.7 1003.4,405.8 996.6,403.7 995.7,348.6" fill="#8f302c" />
<polygon points="1005.3,345.7 1012.5,344.6 1013.5,407.9 1003.6,410.1" fill="#cfc9bb" />
<polygon points="982.2,367.7 993.2,366.0 996.6,403.7 999.6,414.3 991.1,420.6 984.7,414.3" fill="#161616" />
<polygon points="1040.2,380.8 1052.9,376.6 1063.1,387.2 1057.2,402.0 1046.2,397.3 1039.8,391.0" fill="#b8b4a6" />
<polygon points="1039.0,368.1 1048.3,367.3 1048.7,374.0 1039.8,376.2" fill="#8e3030" />
<polygon points="943.4,314.7 945.8,312.0 962.3,312.0 965.7,315.2 966.5,358.2 963.5,387.8 945.8,390.6 943.8,387.8" fill="url(#cyl)" />
<ellipse cx="954.2" cy="314.3" rx="8.200" ry="2.400" fill="#1d1e20"/>
<polygon points="959.3,348.6 966.9,348.6 983.0,376.2 981.8,387.2 972.0,376.6" fill="#0b0b0b" />
<polygon points="938.6,391.4 945.8,388.4 974.1,388.0 980.5,399.5 980.5,406.2 932.2,431.2 939.6,416.4" fill="url(#redg)" />
<polygon points="932.2,431.2 980.5,405.0 983.7,441.8 942.8,460.9" fill="url(#fin)" />
<polygon points="931.1,452.6 937.8,456.7 950.0,486.8 945.1,492.9 941.1,515.3 930.1,514.8 928.0,501.0 927.0,472.5" fill="url(#redg)" />
<polygon points="933.7,490.8 938.0,492.1 938.0,513.2 934.3,512.2" fill="#222" stroke="#b8b4a8" stroke-width=".8"/>
<polygon points="946.3,493.3 972.4,479.1 986.6,468.9 980.1,482.7 978.9,501.0 977.7,535.6 970.3,562.0 960.6,570.2 952.4,553.9 950.4,521.4" fill="url(#wpan)" />
<polygon points="910.7,535.6 919.7,520.7 946.9,514.6 948.8,521.4 928.0,529.5 926.0,562.0 916.6,560.0 911.8,553.9" fill="#bfbbae" />
<polygon points="922.5,524.4 943.9,518.3 944.3,520.3 923.2,526.6" fill="#55524a" />
<polygon points="842.2,643.4 911.6,562.4 918.3,560.4 919.5,570.2 880.8,612.9 856.8,640.3 846.7,660.7 844.2,662.9" fill="url(#wing)" />
<polygon points="960.6,580.3 972.4,580.7 981.3,597.6 972.4,608.8 971.2,632.0 956.5,621.0 950.4,602.7 954.7,594.6" fill="#b4b0a2" />
<polygon points="953.3,611.3 968.3,619.4 970.3,629.2 957.5,621.0" fill="#2a2a28" stroke="#d0ccc0" stroke-width=".8"/>
<polygon points="1064.3,448.5 1084.2,444.1 1088.1,449.4 1081.4,459.3 1068.4,470.5 1064.3,460.3" fill="#b2aea0" />
</g>
<g clip-path="url(#shipclip)" opacity=".3"><use href="#grid"/></g>
<polygon points="965.7,433.8 981.6,427.0 981.6,444.4 967.8,450.7" fill="#5fd23c" fill-opacity=".35"/>
<polygon points="981.6,444.4 981.6,434.4 998.5,428.3 998.7,438.9 990.0,443.9" fill="#8a160c" fill-opacity=".85"/>
<polygon points="981.6,444.8 997.9,451.4 984.7,459.2 967.8,452.8" fill="#101ca8" fill-opacity=".9"/>
<path d="M981.6 444.4L981.6 367.7" stroke="#2450f0" stroke-width="1.500"/>
<polygon points="981.6,347.1 975.0,368.7 981.6,370.7 988.5,368.7" fill="#2a56ff" />
<path d="M981.6 444.4L931.8 423.8" stroke="#7fe34e" stroke-width="1.500"/>
<polygon points="918.6,417.3 928.0,427.4 933.9,425.9 935.2,419.0 929.7,416.0" fill="#72d444" />
<path d="M981.6 444.4L922.5 472.1" stroke="#d43c2c" stroke-width="1.500"/>
<polygon points="901.2,479.9 919.5,465.2 924.0,468.5 925.6,477.0" fill="#d8382a" />
</svg>
<!-- tool palette -->
<div class="a" style="left:2.200px;top:2.200px;width:42px;height:161.500px;background:#a9a9a9;border-radius:4px;box-shadow:0 0 2px rgba(0,0,0,.6)"></div>
<div class="a" style="left:14px;top:9px;width:18px;height:1.200px;background:#6a6a6a"></div>
<div class="a" style="left:14px;top:12.300px;width:18px;height:1.200px;background:#6a6a6a"></div>
<div class="a" style="left:5.300px;top:21.600px;width:35.500px;height:22.400px;background:#e4e4e4;border-radius:3px 3px 0 0"></div>
<div class="a" style="left:5.300px;top:45px;width:35.500px;height:22.300px;background:#8fb8f2"></div>
<div class="a" style="left:5.300px;top:68.300px;width:35.500px;height:22.300px;background:#e4e4e4"></div>
<div class="a" style="left:5.300px;top:91.600px;width:35.500px;height:22.300px;background:#e4e4e4"></div>
<div class="a" style="left:5.300px;top:114.900px;width:35.500px;height:22.300px;background:#e4e4e4"></div>
<div class="a" style="left:5.300px;top:138.200px;width:35.500px;height:22.300px;background:#e4e4e4;border-radius:0 0 3px 3px"></div>
<svg style="left:15px;top:24px" width="17" height="17" viewBox="0 0 17 17"><path d="M4.600 16.300c-1.300-1.800-2.600-4.300-3.900-6.300-.5-.9.700-1.800 1.500-.9l1.600 1.900-.9-7.300c-.1-1 1.400-1.300 1.600-.2l.9 5 .1-7.200c0-1.100 1.700-1.100 1.700 0l.3 7.100 1.300-6.400c.2-1 1.700-.8 1.600.3l-.9 6.700 1.700-4.300c.4-1 1.800-.5 1.500.5-.8 3-1.300 5.200-1.800 7.300-.3 1.500-.7 2.500-1.500 3.800z" fill="#484848"/></svg>
<svg style="left:14.500px;top:47.500px" width="18" height="18" viewBox="0 0 18 18"><path d="M9 1.500v15M1.500 9h15" stroke="#f4f8ff" stroke-width="1.200" stroke-dasharray="5.500 4"/><path d="M6.700 3.800L9 1.300l2.300 2.500M6.700 14.200L9 16.700l2.300-2.500M3.800 6.700L1.300 9l2.500 2.300M14.200 6.700L16.700 9l-2.500 2.300" fill="none" stroke="#f4f8ff" stroke-width="1.300"/></svg>
<svg style="left:15px;top:71px" width="17" height="17" viewBox="0 0 17 17"><path d="M9.500 1.800A6.700 6.700 0 0 1 9 15.200M7.500 15.200A6.700 6.700 0 0 1 7 1.900" fill="none" stroke="#484848" stroke-width="1.200"/><path d="M9.300 1.600l3-.3M9.300 1.600l.8 3.200M7.700 15.400l-3 .4M7.700 15.400l-.8-3.200" stroke="#484848" stroke-width="1.200" fill="none"/><path d="M12.800 1v4.200H8.600M4.200 16v-4.200h4.200" fill="none" stroke="#484848" stroke-width="0" /></svg>
<svg style="left:15px;top:94.500px" width="17" height="17" viewBox="0 0 17 17"><rect x=".8" y=".8" width="15" height="15" fill="none" stroke="#484848" stroke-width="1.200"/><rect x=".8" y="11" width="4.800" height="4.800" fill="none" stroke="#484848" stroke-width="1.200"/><path d="M6.500 10.100l6.300-6.300M8.200 3.600h4.800v4.800" fill="none" stroke="#484848" stroke-width="1.200"/></svg>
<svg style="left:15px;top:118px" width="17" height="17" viewBox="0 0 17 17"><rect x="2" y="2" width="13" height="13" fill="none" stroke="#484848" stroke-width="1.100" stroke-dasharray="6 3.500" stroke-dashoffset="-3.500"/><path d="M.3.300h3.400v3.400H.3zM13.300.3h3.400v3.400h-3.400zM.3 13.300h3.400v3.400H.3zM13.300 13.300h3.400v3.400h-3.400z" fill="#484848"/></svg>
<svg style="left:14px;top:140.500px" width="19" height="19" viewBox="0 0 19 19"><circle cx="9.500" cy="9.500" r="7.200" fill="none" stroke="#484848" stroke-width="1.100" stroke-dasharray="8 3.300" stroke-dashoffset="4"/><path d="M9.500 4.300v10.400M4.300 9.500h10.400" stroke="#484848" stroke-width="1.100"/><path d="M7.800 6L9.500 4.200 11.200 6M7.800 13l1.700 1.800 1.700-1.800M6 7.800L4.200 9.500 6 11.200M13 7.800l1.800 1.700-1.800 1.700" fill="none" stroke="#484848" stroke-width="1.100"/><path d="M16 1.200h2v2zM3 17.800H1v-2z" fill="#484848"/></svg>
<!-- camera icon -->
<svg style="left:68px;top:90px" width="31" height="22" viewBox="0 0 31 22"><circle cx="6.500" cy="11" r="6" fill="#fff"/><circle cx="16" cy="7" r="7" fill="#fff"/><rect x="5.500" y="10" width="18" height="11.500" rx="1.500" fill="#fff"/><path d="M23 13.500l6.500-3v9l-6.500-3z" fill="#fff"/></svg>
<!-- orientation gizmo -->
<div class="a" style="left:1067px;top:9px;width:18px;height:1.100px;background:#8a8a8a"></div>
<div class="a" style="left:1067px;top:12px;width:18px;height:1.100px;background:#8a8a8a"></div>
<svg style="left:1061px;top:0" width="125" height="130" viewBox="1450 115 125 130">
<defs><radialGradient id="gz" cx=".4" cy=".35" r=".7"><stop offset="0" stop-color="#e6e6e6"/><stop offset="1" stop-color="#b4b4b4"/></radialGradient></defs>
<path d="M1513.400 173l-16.500-9.500" stroke="#c6c6c6" stroke-width="5" stroke-linecap="round"/><circle cx="1496.400" cy="164.600" r="4.600" fill="#c9c9c9"/>
<path d="M1513.400 173l16.500-9.500" stroke="#c6c6c6" stroke-width="5" stroke-linecap="round"/><circle cx="1530.400" cy="164.600" r="4.600" fill="#c9c9c9"/>
<path d="M1513.400 176l-4.600 19.500a5 2.600 0 0 0 9.200 0z" fill="#c4c4c4"/>
<path d="M1513.400 163.700l-7.900-22.600h16.200z" fill="#8cc65a"/>
<path d="M1505.900 176l-23.600 1.200c.3 6.500 3 12 8.200 16z" fill="#b24c3e"/>
<path d="M1520.900 176l23.600 1.200c-.3 6.500-3 12-8.200 16z" fill="#4a7ad8"/>
<path d="M1513.400 163.700l8.300 4.700v9.500l-8.300 4.800-8.300-4.800v-9.500z" fill="url(#gz)"/>
<path d="M1513.400 163.700l8.300 4.700-8.300 4.800-8.300-4.800z" fill="#bdbdbd"/>
<text x="1513.400" y="135.500" font-family="Liberation Sans,sans-serif" font-size="14.500" font-weight="bold" fill="#fff" text-anchor="middle">y</text>
<text x="1476.700" y="191.500" font-family="Liberation Sans,sans-serif" font-size="14.500" font-weight="bold" fill="#fff" text-anchor="middle">x</text>
<text x="1550" y="191.500" font-family="Liberation Sans,sans-serif" font-size="14.500" font-weight="bold" fill="#fff" text-anchor="middle">z</text>
<rect x="1546.300" y="137.800" width="7.600" height="4.800" rx=".8" fill="#d8d8d8"/><path d="M1548 137.800v-1.800a2.300 2.300 0 0 1 4.600 0" fill="none" stroke="#d8d8d8" stroke-width="1.200"/>
<path d="M1496.800 224.300l-9.800 4.600 9.800 4.600" fill="none" stroke="#a8a8a8" stroke-width="1.200"/>
<text x="1500.500" y="234" font-family="Liberation Sans,sans-serif" font-size="14.200" fill="#b6b6b6">Persp</text>
</svg>

</div>

<!-- ===== PROJECT ===== -->
<svg width="0" height="0" style="left:0;top:0"><defs><filter id="tb"><feGaussianBlur stdDeviation=".45"/></filter></defs></svg>
<div class="tabbar" style="left:0;top:775.200px;width:1575px;height:22.800px;border-radius:0;border-top:1px solid #979797"></div>
<div class="tab" style="left:0;top:777.500px;width:89px;height:20.500px;border-radius:0 3px 0 0"></div>
<svg style="left:7.500px;top:782.800px" width="14" height="12" viewBox="0 0 14 12"><path d="M.3 1.200a.9.9 0 0 1 .9-.9h3.900l1.500 1.700h6.200a.9.9 0 0 1 .9.9v7.900a.9.9 0 0 1-.9.900H1.200a.9.9 0 0 1-.9-.9z" fill="#4a4a4a"/></svg>
<div class="t" style="left:25.500px;top:779.900px">Project</div>
<svg style="left:100px;top:782px" width="12" height="13" viewBox="0 0 12 13"><rect x=".6" y=".6" width="10.800" height="11.800" rx="1" fill="#8c8c8c" stroke="#4a4a4a" stroke-width="1.100"/><path d="M2.500 3.500h7M2.500 6.500h7M2.500 9.500h7" stroke="#3c3c3c" stroke-width="1.100"/></svg>
<div class="t" style="left:116.500px;top:779.900px">Console</div>
<svg style="left:1536px;top:781.500px" width="10" height="11" viewBox="0 0 10 11"><rect x=".7" y="5.200" width="8.600" height="5" rx="1" fill="none" stroke="#555" stroke-width="1.200"/><path d="M7.600 5.200V2.900a2.400 2.400 0 0 0-4.800-.2" fill="none" stroke="#555" stroke-width="1.200"/></svg>
<div class="dots" style="left:1558.500px;top:781.500px"><i></i><i></i><i></i></div>
<div class="panel" style="left:0;top:798px;width:1575px;height:357px"></div>
<div class="a" style="left:0;top:798px;width:1575px;height:23.500px;background:#cbcbcb;border-bottom:1px solid #9e9e9e"></div>
<svg style="left:7.500px;top:803px" width="13" height="13" viewBox="0 0 13 13"><path d="M6.500 0v13M0 6.500h13" stroke="#3a3a3a" stroke-width="1.800"/></svg>
<div class="tri" style="left:25.500px;top:807px;width:9.0px;height:5.5px"></div>
<div class="fld" style="left:1058.500px;top:801.500px;width:333px;height:16.500px;border-radius:4px 0 0 4px"></div>
<svg style="left:1063.500px;top:806px" width="9" height="9" viewBox="0 0 9 9"><circle cx="3.300" cy="3.300" r="2.400" fill="none" stroke="#6a6a6a" stroke-width="1.300"/><path d="M5 5.200l2.800 2.900" stroke="#6a6a6a" stroke-width="1.500"/></svg>
<div class="a" style="left:1391px;top:801.500px;width:20px;height:16.500px;background:#d6d6d6;border:1px solid #a0a0a0;border-radius:0 4px 4px 0"></div>
<svg style="left:1395px;top:804px" width="12" height="12" viewBox="0 0 12 12"><path d="M3.500 1H11v7.500H8.500M1 5h5.500v6H1zM6 6l3.600-3.600M6.700 2.300h3v3" fill="none" stroke="#555" stroke-width="1.100"/></svg>
<div class="a" style="left:1415px;top:799px;width:1px;height:22px;background:#b4b4b4"></div>
<div class="a" style="left:1443.5px;top:799px;width:1px;height:22px;background:#b4b4b4"></div>
<div class="a" style="left:1472.5px;top:799px;width:1px;height:22px;background:#b4b4b4"></div>
<div class="a" style="left:1501px;top:799px;width:1px;height:22px;background:#b4b4b4"></div>
<div class="a" style="left:1530px;top:799px;width:1px;height:22px;background:#b4b4b4"></div>
<svg style="left:1421px;top:801.500px" width="16" height="16" viewBox="0 0 16 16"><circle cx="5" cy="11" r="4.300" fill="#505050"/><path d="M2.500 1h6v5h-6z" fill="#505050"/><path d="M11.500 3.500l4 8.500h-6.500z" fill="#505050"/></svg>
<svg style="left:1450px;top:802.500px" width="15" height="14" viewBox="0 0 15 14"><path d="M7.500 1h6v6l-6.500 6.500-6-6z" fill="#505050"/><circle cx="10.800" cy="3.700" r="1.200" fill="#cbcbcb"/></svg>
<div class="a" style="left:1479.500px;top:802.500px;width:15px;height:15px;border-radius:50%;background:#c2c2c2"></div>
<svg style="left:1508px;top:802px" width="15" height="15" viewBox="0 0 15 15"><path d="M7.500.8l2 4.500 4.900.5-3.700 3.300 1.100 4.800-4.300-2.500-4.300 2.500 1.100-4.800L.6 5.800l4.900-.5z" fill="#7c7c7c"/></svg>
<svg style="left:1536.500px;top:803px" width="18" height="13" viewBox="0 0 18 13"><path d="M1 6.500c2-3 4.800-4.500 8-4.500s6 1.500 8 4.500c-2 3-4.800 4.500-8 4.500s-6-1.500-8-4.500z" fill="none" stroke="#3c3c3c" stroke-width="1.300"/><circle cx="9" cy="6.500" r="2.400" fill="#3c3c3c"/><path d="M2.500 12.300L15.500.7" stroke="#3c3c3c" stroke-width="1.400"/></svg>
<div class="t" style="left:1555px;top:800.500px">15</div>
<div class="a" style="left:230px;top:821.500px;width:1px;height:333.500px;background:#9e9e9e"></div>
<svg style="left:20.0px;top:824.0px" width="14" height="14" viewBox="0 0 15 15"><path d="M7.500.8l2 4.500 4.900.5-3.700 3.300 1.100 4.800-4.300-2.500-4.300 2.500 1.100-4.800L.6 5.800l4.900-.5z" fill="#4e4e4e"/></svg>
<div class="t b" style="left:38.5px;top:821.5px">Favorites</div>
<div class="trd" style="left:4.5px;top:826.5px"></div>
<svg style="left:35.3px;top:841.8px" width="14" height="14" viewBox="0 0 14 14"><circle cx="5.700" cy="5.700" r="4.600" fill="none" stroke="#4e4e4e" stroke-width="1.100"/><path d="M9.200 9.200l3.800 3.800" stroke="#4e4e4e" stroke-width="1.700"/></svg>
<div class="t" style="left:53.8px;top:839.3px">All Materials</div>
<svg style="left:35.3px;top:859.6px" width="14" height="14" viewBox="0 0 14 14"><circle cx="5.700" cy="5.700" r="4.600" fill="none" stroke="#4e4e4e" stroke-width="1.100"/><path d="M9.200 9.200l3.800 3.800" stroke="#4e4e4e" stroke-width="1.700"/></svg>
<div class="t" style="left:53.8px;top:857.1px">All Models</div>
<svg style="left:35.3px;top:877.3px" width="14" height="14" viewBox="0 0 14 14"><circle cx="5.700" cy="5.700" r="4.600" fill="none" stroke="#4e4e4e" stroke-width="1.100"/><path d="M9.200 9.200l3.800 3.800" stroke="#4e4e4e" stroke-width="1.700"/></svg>
<div class="t" style="left:53.8px;top:874.8px">All Prefabs</div>
<svg style="left:19.0px;top:912.1px" width="16" height="13" viewBox="0 0 16 13"><path d="M.3 1.600a1 1 0 0 1 1-1h4.200l1.500 1.800h5.700a1 1 0 0 1 1 1v1.300H3.600L.3 11z" fill="#4e4e4e"/><path d="M3.900 5.800h11.600l-2.800 6.600H1z" fill="#4e4e4e"/></svg>
<div class="t b" style="left:38.5px;top:909.1px">Assets</div>
<div class="trd" style="left:4.5px;top:914.1px"></div>
<svg style="left:35.3px;top:929.9px" width="16" height="13" viewBox="0 0 16 13"><path d="M.3 1.600a1 1 0 0 1 1-1h4.200l1.500 1.800h6.700a1 1 0 0 1 1 1v8a1 1 0 0 1-1 1H1.300a1 1 0 0 1-1-1z" fill="#4e4e4e"/></svg>
<div class="t" style="left:53.8px;top:926.9px">BreakableAsteroids</div>
<div class="trr" style="left:22.8px;top:930.9px"></div>
<svg style="left:35.3px;top:947.7px" width="16" height="13" viewBox="0 0 16 13"><path d="M.3 1.600a1 1 0 0 1 1-1h4.200l1.500 1.800h6.700a1 1 0 0 1 1 1v8a1 1 0 0 1-1 1H1.300a1 1 0 0 1-1-1z" fill="#4e4e4e"/></svg>
<div class="t" style="left:53.8px;top:944.7px">Materials</div>
<svg style="left:35.3px;top:965.4px" width="16" height="13" viewBox="0 0 16 13"><path d="M.3 1.600a1 1 0 0 1 1-1h4.200l1.500 1.800h6.700a1 1 0 0 1 1 1v8a1 1 0 0 1-1 1H1.300a1 1 0 0 1-1-1z" fill="#4e4e4e"/></svg>
<div class="t" style="left:53.8px;top:962.4px">Scenes</div>
<svg style="left:35.3px;top:983.2px" width="16" height="13" viewBox="0 0 16 13"><path d="M.3 1.600a1 1 0 0 1 1-1h4.200l1.500 1.800h5.700a1 1 0 0 1 1 1v1.300H3.600L.3 11z" fill="#4e4e4e"/><path d="M3.900 5.800h11.600l-2.800 6.600H1z" fill="#4e4e4e"/></svg>
<div class="t" style="left:53.8px;top:980.2px">Spaceship Fighter</div>
<div class="trd" style="left:20.8px;top:985.2px"></div>
<svg style="left:51.0px;top:1001.0px" width="16" height="13" viewBox="0 0 16 13"><path d="M.3 1.600a1 1 0 0 1 1-1h4.200l1.500 1.800h5.700a1 1 0 0 1 1 1v1.300H3.600L.3 11z" fill="#4e4e4e"/><path d="M3.900 5.800h11.600l-2.800 6.600H1z" fill="#4e4e4e"/></svg>
<div class="t" style="left:69.5px;top:998.0px">Models</div>
<div class="trd" style="left:36.5px;top:1003.0px"></div>
<svg style="left:66.7px;top:1018.8px" width="16" height="13" viewBox="0 0 16 13"><path d="M.3 1.600a1 1 0 0 1 1-1h4.200l1.500 1.800h6.700a1 1 0 0 1 1 1v8a1 1 0 0 1-1 1H1.300a1 1 0 0 1-1-1z" fill="#4e4e4e"/></svg>
<div class="t" style="left:85.2px;top:1015.8px">Materials</div>
<div class="a" style="left:0;top:1033.6px;width:230px;height:17.800px;background:#aeaeae"></div>
<svg style="left:51.0px;top:1036.6px" width="16" height="13" viewBox="0 0 16 13"><path d="M.3 1.600a1 1 0 0 1 1-1h4.200l1.500 1.800h6.700a1 1 0 0 1 1 1v8a1 1 0 0 1-1 1H1.300a1 1 0 0 1-1-1z" fill="#4e4e4e"/></svg>
<div class="t" style="left:69.5px;top:1033.6px">Prefabs</div>
<svg style="left:51.0px;top:1054.3px" width="16" height="13" viewBox="0 0 16 13"><path d="M.3 1.600a1 1 0 0 1 1-1h4.200l1.500 1.800h6.700a1 1 0 0 1 1 1v8a1 1 0 0 1-1 1H1.300a1 1 0 0 1-1-1z" fill="#4e4e4e"/></svg>
<div class="t" style="left:69.5px;top:1051.3px">Textures</div>
<svg style="left:35.3px;top:1072.1px" width="16" height="13" viewBox="0 0 16 13"><path d="M.3 1.600a1 1 0 0 1 1-1h4.200l1.500 1.800h6.700a1 1 0 0 1 1 1v8a1 1 0 0 1-1 1H1.300a1 1 0 0 1-1-1z" fill="#4e4e4e"/></svg>
<div class="t" style="left:53.8px;top:1069.1px">StarfieldMaterials</div>
<div class="trr" style="left:22.8px;top:1073.1px"></div>
<svg style="left:35.3px;top:1089.9px" width="16" height="13" viewBox="0 0 16 13"><path d="M.3 1.600a1 1 0 0 1 1-1h4.200l1.500 1.800h6.700a1 1 0 0 1 1 1v8a1 1 0 0 1-1 1H1.300a1 1 0 0 1-1-1z" fill="#4e4e4e"/></svg>
<div class="t" style="left:53.8px;top:1086.9px">UnityTechnologies</div>
<div class="trr" style="left:22.8px;top:1090.9px"></div>
<svg style="left:19.0px;top:1107.7px" width="16" height="13" viewBox="0 0 16 13"><path d="M.3 1.600a1 1 0 0 1 1-1h4.200l1.500 1.800h6.700a1 1 0 0 1 1 1v8a1 1 0 0 1-1 1H1.300a1 1 0 0 1-1-1z" fill="#4e4e4e"/></svg>
<div class="t b" style="left:38.5px;top:1104.7px">Packages</div>
<div class="trr" style="left:6.5px;top:1108.7px"></div>
<div class="a" style="left:231px;top:821.500px;width:1344px;height:23px;background:#cbcbcb;border-bottom:1px solid #b6b6b6"></div>
<div class="t" style="left:235.500px;top:824px">Assets</div>
<svg style="left:282px;top:828.500px" width="7" height="10" viewBox="0 0 7 10"><path d="M1 .7l4.600 4.300L1 9.300" fill="none" stroke="#555" stroke-width="1.100"/></svg>
<div class="t" style="left:296.500px;top:824px">Spaceship Fighter</div>
<svg style="left:414.500px;top:828.500px" width="7" height="10" viewBox="0 0 7 10"><path d="M1 .7l4.600 4.300L1 9.300" fill="none" stroke="#555" stroke-width="1.100"/></svg>
<div class="t b" style="left:428.500px;top:824px">Prefabs</div>
<div class="a" style="left:231px;top:844.500px;width:1344px;height:286px;background:#bfbfbf"></div>
<div class="a" style="left:231px;top:1130.500px;width:1344px;height:24.500px;background:#cecece;border-top:1px solid #b0b0b0"></div>
<div class="a" style="left:1495.500px;top:1142px;width:61px;height:1.500px;background:#6e6e6e"></div>
<div class="a" style="left:1525.500px;top:1137px;width:11px;height:11px;border-radius:50%;background:#5a5a5a"></div>
<div class="a" style="left:249.8px;top:858.500px;width:66.200px;height:66.200px;background:#525252;box-shadow:0 .5px 2px rgba(0,0,0,.5)"></div>
<svg style="left:249.8px;top:858.500px" width="66.200" height="66.200" viewBox="0 0 66.200 66.200"><g filter="url(#tb)" transform="translate(0,-5.500)"><path d="M8.500 42.500l5-2.500 4.500-3.500 1.500-5 1.200 3.500 3-1.500 1.300-6.500 1.500 5.500 4.500 1 5.500 1.500 8 3.500 6 3 3.500 1.500-1 2.500-6 .5-5-1-4 1.800-4-1.500-6 .2-6 1.500-5 .5-5 1.500-3.500.5z" fill="#737577"/><path d="M29 34.500l5-1 9 3.500 6.500 3.500-8-1.500-8-2.500z" fill="#1a2332"/><path d="M14 41l8-2.500 8 .5 6 2.500-8 .5-9 1.500z" fill="#8b8d8f"/><path d="M36 42.500l4-1.500 3 2-2.500 3-3.500-.5z" fill="#4a4c4e"/><path d="M44 40l8 1.500 2.500 1.500-4 .8-6.500-1.500z" fill="#858789"/></g></svg>
<svg style="left:255.6px;top:929.500px" width="13.500" height="13.500" viewBox="0 0 16 16"><path d="M8 .8l6.600 3.500v7.400L8 15.200l-6.600-3.500V4.300z" fill="#3a78d8"/><path d="M8 .8l6.600 3.500L8 7.800 1.400 4.300z" fill="#6aa2f0"/><path d="M8 7.800v7.400l6.600-3.500V4.300z" fill="#2f66c4"/><path d="M1.400 4.300L8 7.800l6.600-3.500M8 7.800v7.400" fill="none" stroke="#cfe0fa" stroke-width=".6"/></svg>
<div class="t" style="left:270.6px;top:927px;font-size:11.200px;letter-spacing:.13px">Prefab1</div>
<div class="a" style="left:334.2px;top:858.500px;width:66.200px;height:66.200px;background:#525252;box-shadow:0 .5px 2px rgba(0,0,0,.5)"></div>
<svg style="left:334.2px;top:858.500px" width="66.200" height="66.200" viewBox="0 0 66.200 66.200"><g filter="url(#tb)" transform="translate(0,-5.500)"><path d="M8.500 42.500l5-2.500 4.500-3.500 1.500-5 1.200 3.500 3-1.500 1.300-6.500 1.500 5.500 4.500 1 5.500 1.500 8 3.500 6 3 3.500 1.500-1 2.500-6 .5-5-1-4 1.800-4-1.500-6 .2-6 1.500-5 .5-5 1.500-3.500.5z" fill="#737577"/><path d="M29 34.500l5-1 9 3.500 6.500 3.500-8-1.500-8-2.500z" fill="#1a2332"/><path d="M14 41l8-2.500 8 .5 6 2.500-8 .5-9 1.500z" fill="#8b8d8f"/><path d="M36 42.500l4-1.500 3 2-2.500 3-3.500-.5z" fill="#4a4c4e"/><path d="M44 40l8 1.500 2.500 1.500-4 .8-6.500-1.500z" fill="#858789"/></g></svg>
<svg style="left:340.0px;top:929.500px" width="13.500" height="13.500" viewBox="0 0 16 16"><path d="M8 .8l6.600 3.500v7.400L8 15.200l-6.600-3.500V4.300z" fill="#3a78d8"/><path d="M8 .8l6.600 3.500L8 7.800 1.400 4.300z" fill="#6aa2f0"/><path d="M8 7.800v7.400l6.600-3.500V4.300z" fill="#2f66c4"/><path d="M1.400 4.300L8 7.800l6.600-3.500M8 7.800v7.400" fill="none" stroke="#cfe0fa" stroke-width=".6"/></svg>
<div class="t" style="left:355.0px;top:927px;font-size:11.200px;letter-spacing:.13px">Prefab2</div>
<div class="a" style="left:418.6px;top:858.500px;width:66.200px;height:66.200px;background:#525252;box-shadow:0 .5px 2px rgba(0,0,0,.5)"></div>
<svg style="left:418.6px;top:858.500px" width="66.200" height="66.200" viewBox="0 0 66.200 66.200"><g filter="url(#tb)" transform="translate(0,-5.500)"><path d="M8.500 42.500l5-2.500 4.500-3.500 1.500-5 1.200 3.500 3-1.500 1.300-6.500 1.500 5.500 4.500 1 5.500 1.500 8 3.500 6 3 3.500 1.500-1 2.500-6 .5-5-1-4 1.800-4-1.500-6 .2-6 1.500-5 .5-5 1.500-3.500.5z" fill="#737577"/><path d="M29 34.500l5-1 9 3.500 6.500 3.500-8-1.500-8-2.500z" fill="#1a2332"/><path d="M14 41l8-2.500 8 .5 6 2.500-8 .5-9 1.500z" fill="#8b8d8f"/><path d="M36 42.500l4-1.500 3 2-2.500 3-3.500-.5z" fill="#4a4c4e"/><path d="M44 40l8 1.500 2.500 1.500-4 .8-6.500-1.500z" fill="#858789"/></g></svg>
<svg style="left:424.4px;top:929.500px" width="13.500" height="13.500" viewBox="0 0 16 16"><path d="M8 .8l6.600 3.500v7.400L8 15.200l-6.600-3.500V4.300z" fill="#3a78d8"/><path d="M8 .8l6.600 3.500L8 7.800 1.400 4.300z" fill="#6aa2f0"/><path d="M8 7.800v7.400l6.600-3.500V4.300z" fill="#2f66c4"/><path d="M1.400 4.300L8 7.800l6.600-3.500M8 7.800v7.400" fill="none" stroke="#cfe0fa" stroke-width=".6"/></svg>
<div class="t" style="left:439.4px;top:927px;font-size:11.200px;letter-spacing:.13px">Prefab3</div>
<div class="a" style="left:503.1px;top:858.500px;width:66.200px;height:66.200px;background:#525252;box-shadow:0 .5px 2px rgba(0,0,0,.5)"></div>
<svg style="left:503.1px;top:858.500px" width="66.200" height="66.200" viewBox="0 0 66.200 66.200"><g filter="url(#tb)" transform="translate(0,-5.500)"><path d="M8.500 42.500l5-2.500 4.500-3.500 1.500-5 1.200 3.500 3-1.500 1.300-6.500 1.500 5.500 4.500 1 5.500 1.500 8 3.500 6 3 3.500 1.500-1 2.500-6 .5-5-1-4 1.800-4-1.500-6 .2-6 1.500-5 .5-5 1.500-3.500.5z" fill="#737577"/><path d="M29 34.500l5-1 9 3.500 6.500 3.500-8-1.500-8-2.500z" fill="#1a2332"/><path d="M14 41l8-2.500 8 .5 6 2.500-8 .5-9 1.500z" fill="#8b8d8f"/><path d="M36 42.500l4-1.500 3 2-2.500 3-3.500-.5z" fill="#4a4c4e"/><path d="M44 40l8 1.500 2.500 1.500-4 .8-6.500-1.500z" fill="#858789"/></g></svg>
<svg style="left:508.8px;top:929.500px" width="13.500" height="13.500" viewBox="0 0 16 16"><path d="M8 .8l6.600 3.500v7.400L8 15.200l-6.600-3.500V4.300z" fill="#3a78d8"/><path d="M8 .8l6.600 3.500L8 7.800 1.400 4.300z" fill="#6aa2f0"/><path d="M8 7.800v7.400l6.600-3.500V4.300z" fill="#2f66c4"/><path d="M1.400 4.300L8 7.800l6.600-3.500M8 7.800v7.400" fill="none" stroke="#cfe0fa" stroke-width=".6"/></svg>
<div class="t" style="left:523.8px;top:927px;font-size:11.200px;letter-spacing:.13px">Prefab4</div>
<div class="a" style="left:587.5px;top:858.500px;width:66.200px;height:66.200px;background:#525252;box-shadow:0 .5px 2px rgba(0,0,0,.5)"></div>
<svg style="left:587.5px;top:858.500px" width="66.200" height="66.200" viewBox="0 0 66.200 66.200"><g filter="url(#tb)" transform="translate(0,-5.500)"><path d="M8.500 42.500l5-2.500 4.500-3.500 1.500-5 1.200 3.500 3-1.500 1.300-6.500 1.500 5.500 4.500 1 5.500 1.500 8 3.500 6 3 3.500 1.500-1 2.500-6 .5-5-1-4 1.800-4-1.500-6 .2-6 1.500-5 .5-5 1.500-3.500.5z" fill="#737577"/><path d="M29 34.500l5-1 9 3.500 6.500 3.500-8-1.500-8-2.500z" fill="#1a2332"/><path d="M14 41l8-2.500 8 .5 6 2.500-8 .5-9 1.500z" fill="#8b8d8f"/><path d="M36 42.500l4-1.500 3 2-2.500 3-3.500-.5z" fill="#4a4c4e"/><path d="M44 40l8 1.500 2.500 1.500-4 .8-6.500-1.500z" fill="#858789"/></g></svg>
<svg style="left:593.2px;top:929.500px" width="13.500" height="13.500" viewBox="0 0 16 16"><path d="M8 .8l6.600 3.500v7.400L8 15.200l-6.600-3.500V4.300z" fill="#3a78d8"/><path d="M8 .8l6.600 3.500L8 7.800 1.400 4.300z" fill="#6aa2f0"/><path d="M8 7.800v7.400l6.600-3.500V4.300z" fill="#2f66c4"/><path d="M1.400 4.300L8 7.800l6.600-3.500M8 7.800v7.400" fill="none" stroke="#cfe0fa" stroke-width=".6"/></svg>
<div class="t" style="left:608.2px;top:927px;font-size:11.200px;letter-spacing:.13px">Prefab5</div>
<div class="a" style="left:671.9px;top:858.500px;width:66.200px;height:66.200px;background:#525252;box-shadow:0 .5px 2px rgba(0,0,0,.5)"></div>
<svg style="left:671.9px;top:858.500px" width="66.200" height="66.200" viewBox="0 0 66.200 66.200"><g filter="url(#tb)" transform="translate(0,-5.500)"><path d="M8.500 42.500l5-2.500 4.500-3.500 1.500-5 1.200 3.500 3-1.500 1.300-6.500 1.500 5.500 4.500 1 5.500 1.500 8 3.500 6 3 3.500 1.500-1 2.500-6 .5-5-1-4 1.800-4-1.500-6 .2-6 1.500-5 .5-5 1.500-3.500.5z" fill="#737577"/><path d="M29 34.500l5-1 9 3.500 6.500 3.500-8-1.500-8-2.500z" fill="#1a2332"/><path d="M14 41l8-2.500 8 .5 6 2.500-8 .5-9 1.500z" fill="#8b8d8f"/><path d="M36 42.500l4-1.500 3 2-2.500 3-3.500-.5z" fill="#4a4c4e"/><path d="M44 40l8 1.500 2.500 1.500-4 .8-6.500-1.500z" fill="#858789"/></g></svg>
<svg style="left:677.7px;top:929.500px" width="13.500" height="13.500" viewBox="0 0 16 16"><path d="M8 .8l6.600 3.500v7.400L8 15.200l-6.600-3.500V4.300z" fill="#3a78d8"/><path d="M8 .8l6.600 3.500L8 7.800 1.400 4.300z" fill="#6aa2f0"/><path d="M8 7.800v7.400l6.600-3.500V4.300z" fill="#2f66c4"/><path d="M1.400 4.300L8 7.800l6.600-3.500M8 7.800v7.400" fill="none" stroke="#cfe0fa" stroke-width=".6"/></svg>
<div class="t" style="left:692.7px;top:927px;font-size:11.200px;letter-spacing:.13px">Prefab6</div>
<div class="a" style="left:756.3px;top:858.500px;width:66.200px;height:66.200px;background:#525252;box-shadow:0 .5px 2px rgba(0,0,0,.5)"></div>
<svg style="left:756.3px;top:858.500px" width="66.200" height="66.200" viewBox="0 0 66.200 66.200"><g filter="url(#tb)" transform="translate(0,-5.500)"><path d="M8.500 42.500l5-2.500 4.500-3.500 1.500-5 1.200 3.500 3-1.500 1.300-6.500 1.500 5.500 4.500 1 5.500 1.500 8 3.500 6 3 3.500 1.500-1 2.500-6 .5-5-1-4 1.800-4-1.500-6 .2-6 1.500-5 .5-5 1.500-3.500.5z" fill="#737577"/><path d="M29 34.500l5-1 9 3.500 6.500 3.500-8-1.500-8-2.500z" fill="#1a2332"/><path d="M14 41l8-2.500 8 .5 6 2.500-8 .5-9 1.500z" fill="#8b8d8f"/><path d="M36 42.500l4-1.500 3 2-2.500 3-3.500-.5z" fill="#4a4c4e"/><path d="M44 40l8 1.500 2.500 1.500-4 .8-6.500-1.500z" fill="#858789"/></g></svg>
<svg style="left:762.1px;top:929.500px" width="13.500" height="13.500" viewBox="0 0 16 16"><path d="M8 .8l6.600 3.500v7.400L8 15.200l-6.600-3.500V4.300z" fill="#3a78d8"/><path d="M8 .8l6.600 3.500L8 7.800 1.400 4.300z" fill="#6aa2f0"/><path d="M8 7.800v7.400l6.600-3.500V4.300z" fill="#2f66c4"/><path d="M1.400 4.300L8 7.800l6.600-3.500M8 7.800v7.400" fill="none" stroke="#cfe0fa" stroke-width=".6"/></svg>
<div class="t" style="left:777.1px;top:927px;font-size:11.200px;letter-spacing:.13px">Prefab7</div>
<div class="a" style="left:840.7px;top:858.500px;width:66.200px;height:66.200px;background:#525252;box-shadow:0 .5px 2px rgba(0,0,0,.5)"></div>
<svg style="left:840.7px;top:858.500px" width="66.200" height="66.200" viewBox="0 0 66.200 66.200"><g filter="url(#tb)" transform="translate(0,-5.500)"><path d="M8.500 42.500l5-2.500 4.500-3.500 1.500-5 1.200 3.500 3-1.500 1.300-6.500 1.500 5.500 4.500 1 5.500 1.500 8 3.500 6 3 3.500 1.500-1 2.500-6 .5-5-1-4 1.800-4-1.500-6 .2-6 1.500-5 .5-5 1.500-3.500.5z" fill="#737577"/><path d="M29 34.500l5-1 9 3.500 6.500 3.500-8-1.500-8-2.500z" fill="#1a2332"/><path d="M14 41l8-2.500 8 .5 6 2.500-8 .5-9 1.500z" fill="#8b8d8f"/><path d="M36 42.500l4-1.500 3 2-2.500 3-3.500-.5z" fill="#4a4c4e"/><path d="M44 40l8 1.500 2.500 1.500-4 .8-6.500-1.500z" fill="#858789"/></g></svg>
<svg style="left:846.5px;top:929.500px" width="13.500" height="13.500" viewBox="0 0 16 16"><path d="M8 .8l6.600 3.500v7.400L8 15.200l-6.600-3.500V4.300z" fill="#3a78d8"/><path d="M8 .8l6.600 3.500L8 7.800 1.400 4.300z" fill="#6aa2f0"/><path d="M8 7.800v7.400l6.600-3.500V4.300z" fill="#2f66c4"/><path d="M1.400 4.300L8 7.800l6.600-3.500M8 7.800v7.400" fill="none" stroke="#cfe0fa" stroke-width=".6"/></svg>
<div class="t" style="left:861.5px;top:927px;font-size:11.200px;letter-spacing:.13px">Prefab8</div>
<div class="a" style="left:925.2px;top:858.500px;width:66.200px;height:66.200px;background:#525252;box-shadow:0 .5px 2px rgba(0,0,0,.5)"></div>
<svg style="left:925.2px;top:858.500px" width="66.200" height="66.200" viewBox="0 0 66.200 66.200"><g filter="url(#tb)" transform="translate(0,-5.500)"><path d="M8.500 42.500l5-2.500 4.500-3.500 1.500-5 1.200 3.500 3-1.500 1.300-6.500 1.500 5.500 4.500 1 5.500 1.500 8 3.500 6 3 3.500 1.500-1 2.500-6 .5-5-1-4 1.800-4-1.500-6 .2-6 1.500-5 .5-5 1.500-3.500.5z" fill="#737577"/><path d="M29 34.500l5-1 9 3.500 6.500 3.500-8-1.500-8-2.500z" fill="#1a2332"/><path d="M14 41l8-2.500 8 .5 6 2.500-8 .5-9 1.500z" fill="#8b8d8f"/><path d="M36 42.500l4-1.500 3 2-2.500 3-3.500-.5z" fill="#4a4c4e"/><path d="M44 40l8 1.500 2.500 1.500-4 .8-6.500-1.500z" fill="#858789"/></g></svg>
<svg style="left:930.9px;top:929.500px" width="13.500" height="13.500" viewBox="0 0 16 16"><path d="M8 .8l6.600 3.500v7.400L8 15.200l-6.600-3.500V4.300z" fill="#3a78d8"/><path d="M8 .8l6.600 3.500L8 7.800 1.400 4.300z" fill="#6aa2f0"/><path d="M8 7.800v7.400l6.600-3.500V4.300z" fill="#2f66c4"/><path d="M1.400 4.300L8 7.800l6.600-3.500M8 7.800v7.400" fill="none" stroke="#cfe0fa" stroke-width=".6"/></svg>
<div class="t" style="left:945.9px;top:927px;font-size:11.200px;letter-spacing:.13px">Prefab9</div>
<div class="a" style="left:1009.6px;top:858.500px;width:66.200px;height:66.200px;background:#525252;box-shadow:0 .5px 2px rgba(0,0,0,.5)"></div>
<svg style="left:1009.6px;top:858.500px" width="66.200" height="66.200" viewBox="0 0 66.200 66.200"><g filter="url(#tb)" transform="translate(0,-5.500)"><path d="M8.500 42.500l5-2.500 4.500-3.500 1.500-5 1.200 3.500 3-1.500 1.300-6.500 1.500 5.500 4.500 1 5.500 1.500 8 3.500 6 3 3.500 1.500-1 2.500-6 .5-5-1-4 1.800-4-1.500-6 .2-6 1.500-5 .5-5 1.500-3.500.5z" fill="#737577"/><path d="M29 34.500l5-1 9 3.500 6.500 3.500-8-1.500-8-2.500z" fill="#1a2332"/><path d="M14 41l8-2.500 8 .5 6 2.500-8 .5-9 1.500z" fill="#8b8d8f"/><path d="M36 42.500l4-1.500 3 2-2.500 3-3.500-.5z" fill="#4a4c4e"/><path d="M44 40l8 1.500 2.500 1.500-4 .8-6.500-1.500z" fill="#858789"/></g></svg>
<svg style="left:1012.1px;top:929.500px" width="13.500" height="13.500" viewBox="0 0 16 16"><path d="M8 .8l6.600 3.500v7.400L8 15.200l-6.600-3.500V4.300z" fill="#3a78d8"/><path d="M8 .8l6.600 3.500L8 7.800 1.400 4.300z" fill="#6aa2f0"/><path d="M8 7.800v7.400l6.600-3.500V4.300z" fill="#2f66c4"/><path d="M1.400 4.300L8 7.800l6.600-3.500M8 7.800v7.400" fill="none" stroke="#cfe0fa" stroke-width=".6"/></svg>
<div class="t" style="left:1027.1px;top:927px;font-size:11.200px;letter-spacing:.13px">Prefab10</div>
<div class="a" style="left:1575px;top:65px;width:2.500px;height:1090px;background:#8c8c8c"></div>

<!-- ===== INSPECTOR ===== -->
<div class="tabbar" style="left:1577.500px;top:65px;width:421.500px"></div>
<div class="tab" style="left:1577.500px;top:65px;width:103px;border-top:2px solid #3c78d8"></div>
<svg style="left:1587px;top:70px" width="11" height="11" viewBox="0 0 11 11"><circle cx="5.500" cy="5.500" r="5.300" fill="#3c3c3c"/><path d="M5.500 4.800v3.800" stroke="#cbcbcb" stroke-width="1.500"/><circle cx="5.500" cy="2.900" r=".95" fill="#cbcbcb"/></svg>
<div class="t" style="left:1603px;top:67px">Inspector</div>
<svg style="left:1958.500px;top:69px" width="10" height="11" viewBox="0 0 10 11"><rect x=".7" y="5.200" width="8.600" height="5" rx="1" fill="none" stroke="#555" stroke-width="1.200"/><path d="M7.600 5.200V2.900a2.400 2.400 0 0 0-4.800-.2" fill="none" stroke="#555" stroke-width="1.200"/></svg>
<div class="dots" style="left:1982px;top:69px"><i></i><i></i><i></i></div>
<div class="panel" style="left:1577.500px;top:86px;width:421.500px;height:1069px"></div>
<svg style="left:1584px;top:96.500px" width="24" height="25" viewBox="0 0 24 25"><path d="M12 .6l11 5.800v12.200L12 24.400 1 18.600V6.400z" fill="#3a78d8"/><path d="M12 .6l11 5.800L12 12.200 1 6.400z" fill="#4f8ce6"/><path d="M12 12.200v12.200l11-5.800V6.400z" fill="#2f69c8"/><path d="M1 6.400l11 5.800 11-5.800M12 12.200v12.200" fill="none" stroke="#c8dcf8" stroke-width=".7"/></svg>
<div class="tri" style="left:1606px;top:121px;width:7.0px;height:4.5px;background:#5a5a5a"></div>
<div class="fld" style="left:1630px;top:98.800px;width:14.500px;height:14.500px;border-radius:2.500px"></div>
<svg style="left:1632.500px;top:101.800px" width="10" height="9" viewBox="0 0 10 9"><path d="M1 4.600l2.800 2.900L9 1.200" fill="none" stroke="#2a2a2a" stroke-width="1.300"/></svg>
<div class="fld" style="left:1652px;top:97px;width:257.500px;height:18px"></div>
<div class="t b" style="left:1655px;top:98.200px">Spaceship</div>
<div class="fld" style="left:1914px;top:98.800px;width:14.500px;height:14.500px;border-radius:2.500px"></div>
<div class="t" style="left:1933.500px;top:96.800px">Static</div>
<div class="tri" style="left:1982.500px;top:103.500px;width:9.0px;height:5.5px;background:#4a4a4a"></div>
<div class="t" style="left:1622px;top:123.500px">Tag</div>
<div class="dd" style="left:1652px;top:123.500px;width:147px;height:18.500px"></div>
<div class="t" style="left:1655px;top:123.500px">Untagged</div>
<div class="tri" style="left:1784.500px;top:130.500px;width:9.0px;height:5.5px"></div>
<div class="t" style="left:1815.500px;top:123.500px">Layer</div>
<div class="dd" style="left:1856px;top:123.500px;width:137.500px;height:18.500px"></div>
<div class="t" style="left:1860px;top:123.500px">Default</div>
<div class="tri" style="left:1978.500px;top:130.500px;width:9.0px;height:5.5px"></div>
<div class="t" style="left:1605px;top:159.500px">Prefab</div>
<div class="a" style="left:1652px;top:159px;width:341.500px;height:18.500px;background:#dfdfdf;border:1px solid #b2b2b2;border-radius:3px"></div>
<div class="a" style="left:1973.500px;top:160px;width:19px;height:16.500px;background:#d6d6d6;border-radius:0 2px 2px 0"></div>
<svg style="left:1654.500px;top:162px" width="12" height="13" viewBox="0 0 16 16"><path d="M8 .8l6.600 3.500v7.400L8 15.200l-6.600-3.500V4.300z" fill="#3a78d8"/><path d="M8 .8l6.600 3.500L8 7.800 1.400 4.300z" fill="#6aa2f0"/><path d="M8 7.800v7.400l6.600-3.500V4.300z" fill="#2f66c4"/><path d="M1.400 4.300L8 7.800l6.600-3.500M8 7.800v7.400" fill="none" stroke="#cfe0fa" stroke-width=".6"/></svg>
<div class="t" style="left:1668px;top:159.500px">Prefab4</div>
<svg style="left:1977.500px;top:163px" width="11" height="11" viewBox="0 0 11 11"><circle cx="5.500" cy="5.500" r="4.700" fill="none" stroke="#4a4a4a" stroke-width="1"/><circle cx="5.500" cy="5.500" r="1.700" fill="#4a4a4a"/></svg>
<div class="dd" style="left:1652px;top:183px;width:118.500px;height:18.500px"></div>
<div class="t" style="left:1655px;top:183.500px">Overrides</div>
<div class="tri" style="left:1755.500px;top:190.500px;width:9.0px;height:5.5px"></div>
<div class="a" style="left:1808px;top:181.500px;width:92.500px;height:18px;background:#e4e4e4;border:1px solid #b2b2b2;border-bottom-color:#939393;border-radius:3px"></div>
<div class="t" style="left:1808px;top:181.500px;width:92.500px;text-align:center">Select</div>
<div class="a" style="left:1905px;top:181.500px;width:86.500px;height:18px;background:#e4e4e4;border:1px solid #b2b2b2;border-bottom-color:#939393;border-radius:3px"></div>
<div class="t" style="left:1905px;top:181.500px;width:86.500px;text-align:center">Open</div>
<div class="a" style="left:1577.500px;top:208px;width:421.500px;height:24.500px;background:#cbcbcb;border-top:1px solid #a6a6a6;border-bottom:1px solid #bababa"></div>
<div class="trd" style="left:1583px;top:216.500px;border-left-width:5px;border-right-width:5px;border-top-width:8px"></div>
<svg style="left:1601px;top:213px" width="15" height="14" viewBox="0 0 15 14"><path d="M7.500 7.500V.8" stroke="#5a9a3a" stroke-width="1.800"/><path d="M7.500 7.500L1 11.800" stroke="#3a6ed0" stroke-width="1.800"/><path d="M7.500 7.500l6.500 4.300" stroke="#d0402e" stroke-width="1.800"/></svg>
<div class="t b" style="left:1644.500px;top:212.200px">Transform</div>
<svg style="left:1934px;top:215px" width="12" height="12" viewBox="0 0 12 12"><circle cx="6" cy="6" r="5.700" fill="#4a4a4a"/><path d="M4.200 4.600a1.900 1.900 0 1 1 2.700 1.700c-.6.300-.9.600-.9 1.300" fill="none" stroke="#cbcbcb" stroke-width="1.300"/><circle cx="6" cy="9.300" r=".8" fill="#cbcbcb"/></svg>
<svg style="left:1956px;top:214.500px" width="13" height="12" viewBox="0 0 13 12"><path d="M0 3.300h13M0 8.700h13" stroke="#4a4a4a" stroke-width="1.200"/><path d="M8.500 .8v5M4.500 6.200v5" stroke="#4a4a4a" stroke-width="1.800"/></svg>
<div class="dots" style="left:1982.500px;top:213.500px"><i></i><i></i><i></i></div>
<div class="t b" style="left:1598px;top:239.4px">Position</div>
<div class="t" style="left:1745.5px;top:238px">X</div>
<div class="fld" style="left:1763.5px;top:238px;width:61px;height:18px"></div>
<div class="t" style="left:1766.0px;top:238px">0</div>
<div class="t" style="left:1830.5px;top:238px">Y</div>
<div class="fld" style="left:1848px;top:238px;width:61px;height:18px"></div>
<div class="t" style="left:1850.5px;top:238px">0</div>
<div class="t" style="left:1915px;top:238px">Z</div>
<div class="fld" style="left:1932.5px;top:238px;width:61px;height:18px"></div>
<div class="t" style="left:1935.0px;top:238px">0</div>
<div class="t b" style="left:1598px;top:261.9px">Rotation</div>
<div class="t" style="left:1745.5px;top:260.5px">X</div>
<div class="fld" style="left:1763.5px;top:260.5px;width:61px;height:18px"></div>
<div class="t" style="left:1766.0px;top:260.5px">-90</div>
<div class="t" style="left:1830.5px;top:260.5px">Y</div>
<div class="fld" style="left:1848px;top:260.5px;width:61px;height:18px"></div>
<div class="t" style="left:1850.5px;top:260.5px">0</div>
<div class="t" style="left:1915px;top:260.5px">Z</div>
<div class="fld" style="left:1932.5px;top:260.5px;width:61px;height:18px"></div>
<div class="t" style="left:1935.0px;top:260.5px">0</div>
<div class="t b" style="left:1598px;top:284.4px">Scale</div>
<div class="t" style="left:1745.5px;top:283px">X</div>
<div class="fld" style="left:1763.5px;top:283px;width:61px;height:18px"></div>
<div class="t" style="left:1766.0px;top:283px">0.016</div>
<div class="t" style="left:1830.5px;top:283px">Y</div>
<div class="fld" style="left:1848px;top:283px;width:61px;height:18px"></div>
<div class="t" style="left:1850.5px;top:283px">0.016</div>
<div class="t" style="left:1915px;top:283px">Z</div>
<div class="fld" style="left:1932.5px;top:283px;width:61px;height:18px"></div>
<div class="t" style="left:1935.0px;top:283px">0.016</div>
<div class="a" style="left:1577.500px;top:282px;width:2.500px;height:19.500px;background:#3c78d8"></div>
<svg style="left:1720px;top:286px" width="15" height="11" viewBox="0 0 15 11"><path d="M6 2.500H4a3 3 0 0 0 0 6h2M9 2.500h2a3 3 0 0 1 0 6H9" fill="none" stroke="#5a5a5a" stroke-width="1.200"/><path d="M2.500 10.500l10-10" stroke="#5a5a5a" stroke-width="1.200"/></svg>
<div class="a" style="left:1577.500px;top:311px;width:421.500px;height:1px;background:#a8a8a8"></div>
<div class="a" style="left:1660.700px;top:322px;width:254.300px;height:25.300px;background:#e4e4e4;border:1px solid #b2b2b2;border-bottom-color:#939393;border-radius:3px"></div>
<div class="t" style="left:1661px;top:326px;width:253.500px;text-align:center">Add Component</div>


<!-- ===== STATUS BAR ===== -->
<div class="a" style="left:0;top:1155px;width:1999px;height:24px;background:#8a8a8a"></div>
<svg style="left:3.200px;top:1158.300px" width="15" height="15" viewBox="0 0 15 15"><path d="M7.500 .8L14.400 14H.6z" fill="#f0b63a" stroke="#d89a20" stroke-width=".6" stroke-linejoin="round"/><path d="M7.500 5v5" stroke="#7a1e12" stroke-width="1.600"/><circle cx="7.500" cy="12" r=".9" fill="#7a1e12"/></svg>
<div class="t" style="left:22.700px;top:1157px;color:#45431f;font-size:13.900px">Component at index 2 could not be loaded when loading game object 'Main Camera'. Removing it.</div>
<div class="a" style="left:1884px;top:1156px;width:1px;height:23px;background:#7e7e7e"></div>
<div class="a" style="left:1912px;top:1156px;width:1px;height:23px;background:#7e7e7e"></div>
<div class="a" style="left:1941px;top:1156px;width:1px;height:23px;background:#7e7e7e"></div>
<div class="a" style="left:1970px;top:1156px;width:1px;height:23px;background:#7e7e7e"></div>
<svg style="left:1890px;top:1159px" width="16" height="17" viewBox="0 0 16 17"><ellipse cx="7" cy="9.500" rx="3.600" ry="5.500" fill="#f2b838"/><circle cx="7" cy="3.800" r="2.200" fill="#f2b838"/><path d="M3.600 6L1 4M3.400 9.500H.5M3.800 13L1.500 15.500M10.400 6L13 3.500M10.600 13l2.200 2.500M5.500 2L4 .5M8.500 2L10 .5" stroke="#f2b838" stroke-width="1.200"/><path d="M13 7v5" stroke="#f2b838" stroke-width="1.800"/><circle cx="13" cy="14.300" r="1" fill="#f2b838"/></svg>
<svg style="left:1918px;top:1160px" width="17" height="15" viewBox="0 0 17 15"><ellipse cx="8" cy="3.500" rx="6" ry="2.600" fill="#555"/><path d="M2 5.500c0 3.400 12 3.400 12 0v2.300c0 3.400-12 3.400-12 0zM2 9.800c0 3.400 12 3.400 12 0v2c0 3.400-12 3.400-12 0z" fill="#555"/><path d="M1 1l15 13" stroke="#555" stroke-width="1.300"/></svg>
<svg style="left:1947px;top:1159px" width="18" height="17" viewBox="0 0 18 17"><circle cx="9" cy="8.500" r="6.500" fill="none" stroke="#555" stroke-width="1.200" stroke-dasharray="8 3"/><ellipse cx="9" cy="8.500" rx="3.300" ry="4.500" fill="#666"/><path d="M2 1.500l14 14" stroke="#555" stroke-width="1.300"/></svg>
<svg style="left:1976.500px;top:1159.500px" width="16" height="16" viewBox="0 0 16 16"><circle cx="8" cy="8" r="7" fill="none" stroke="#555" stroke-width="1.300"/><path d="M4.500 8.300l2.500 2.500 4.700-5" fill="none" stroke="#555" stroke-width="1.500"/></svg>

<div class="a" style="left:0;top:0;width:1999px;height:1.800px;background:#a7a7a4"></div>
<div class="a" style="left:0;top:0;width:1px;height:1170px;background:rgba(255,255,255,.13)"></div>
<svg style="left:0;top:0" width="12" height="12" viewBox="0 0 12 12"><path d="M0 0H9V1.800H8A7 7 0 0 0 1 8.800V10H0z" fill="#d2cbc3"/></svg>
<svg style="left:1987px;top:0" width="12" height="12" viewBox="0 0 12 12"><path d="M12 0H3V1.800H4.500A7 7 0 0 1 11.500 8.800V10H12z" fill="#c3c3c3"/></svg>


</div>
</body>
</html>
